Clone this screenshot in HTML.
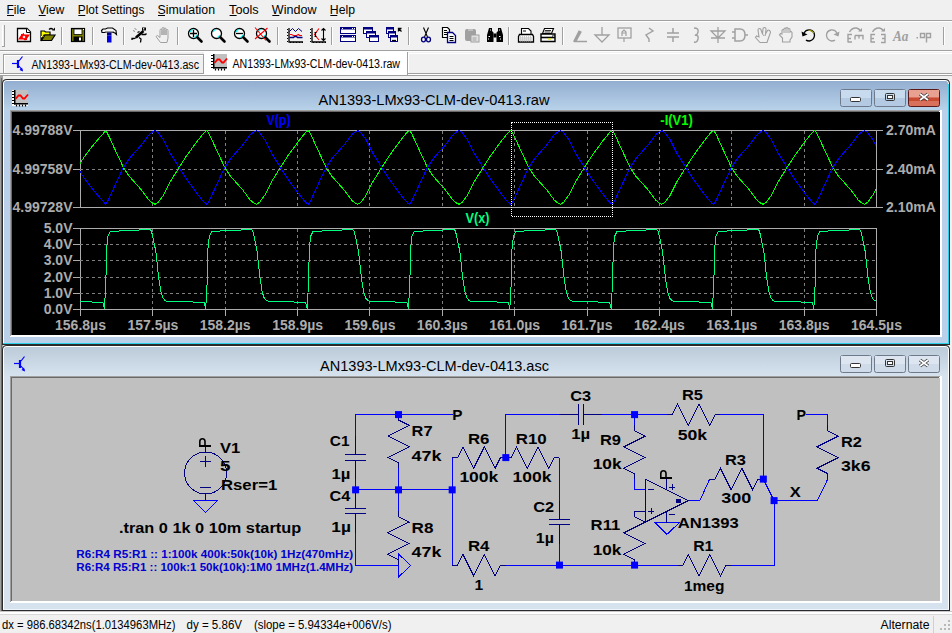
<!DOCTYPE html>
<html><head><meta charset="utf-8"><style>
html,body{margin:0;padding:0;width:952px;height:633px;overflow:hidden;background:#f0f0f0;font-family:"Liberation Sans",sans-serif}
.abs{position:absolute}
</style></head><body>
<svg class="abs" style="left:0;top:0" width="952" height="633" font-family="Liberation Sans"><text x="6.5" y="14.0" font-size="12" font-weight="normal" fill="#000" text-anchor="start" textLength="19.2" lengthAdjust="spacingAndGlyphs" >File</text><rect x="7.0" y="15" width="7" height="1" fill="#000"/><text x="38.2" y="14.0" font-size="12" font-weight="normal" fill="#000" text-anchor="start" textLength="26.2" lengthAdjust="spacingAndGlyphs" >View</text><rect x="38.7" y="15" width="7" height="1" fill="#000"/><text x="77.8" y="14.0" font-size="12" font-weight="normal" fill="#000" text-anchor="start" textLength="66.6" lengthAdjust="spacingAndGlyphs" >Plot Settings</text><rect x="78.3" y="15" width="7" height="1" fill="#000"/><text x="157.5" y="14.0" font-size="12" font-weight="normal" fill="#000" text-anchor="start" textLength="57.5" lengthAdjust="spacingAndGlyphs" >Simulation</text><rect x="158.0" y="15" width="7" height="1" fill="#000"/><text x="229.1" y="14.0" font-size="12" font-weight="normal" fill="#000" text-anchor="start" textLength="29.6" lengthAdjust="spacingAndGlyphs" >Tools</text><rect x="229.6" y="15" width="7" height="1" fill="#000"/><text x="271.8" y="14.0" font-size="12" font-weight="normal" fill="#000" text-anchor="start" textLength="44.7" lengthAdjust="spacingAndGlyphs" >Window</text><rect x="272.3" y="15" width="7" height="1" fill="#000"/><text x="329.8" y="14.0" font-size="12" font-weight="normal" fill="#000" text-anchor="start" textLength="25.2" lengthAdjust="spacingAndGlyphs" >Help</text><rect x="330.3" y="15" width="7" height="1" fill="#000"/><rect x="0" y="20" width="952" height="1" fill="#a0a0a0"/><rect x="0" y="21" width="952" height="1" fill="#fff"/><rect x="0" y="50" width="952" height="1" fill="#a0a0a0"/><rect x="0" y="51" width="952" height="1" fill="#fff"/><rect x="0" y="73" width="952" height="1" fill="#a0a0a0"/><rect x="0" y="74" width="952" height="1" fill="#fff"/><rect x="0" y="75" width="952" height="1" fill="#a0a0a0"/><rect x="3" y="54" width="201" height="1" fill="#a0a0a0"/><rect x="3" y="54" width="1" height="20" fill="#a0a0a0"/><rect x="203" y="54" width="1" height="20" fill="#a0a0a0"/><rect x="4" y="55" width="199" height="1" fill="#fff"/><rect x="4" y="55" width="1" height="18" fill="#fff"/><rect x="204" y="52" width="203" height="23" fill="#fff"/><rect x="407" y="52" width="1" height="23" fill="#a0a0a0"/><rect x="408" y="53" width="544" height="1" fill="#fff"/><rect x="408" y="53" width="1" height="20" fill="#fff"/><text x="31.5" y="69.0" font-size="12.5" font-weight="normal" fill="#000" text-anchor="start" textLength="167.5" lengthAdjust="spacingAndGlyphs" >AN1393-LMx93-CLM-dev-0413.asc</text><text x="232.5" y="67.5" font-size="12.5" font-weight="normal" fill="#000" text-anchor="start" textLength="167.5" lengthAdjust="spacingAndGlyphs" >AN1393-LMx93-CLM-dev-0413.raw</text><g transform="translate(12,56)" fill="none" stroke="#0000ff"><path d="M0 7.5H5" stroke-width="1.2"/><path d="M6 4V12" stroke-width="2.2"/><path d="M7 5L10.5 0.5M7 10L10.5 14.5" stroke-width="1.2"/><path d="M11 15.5L7.5 14L10 11.5Z" fill="#0000ff" stroke="none"/></g><g transform="translate(211,54)"><rect x="3" y="0" width="13" height="13" fill="#c0c0c0"/><rect x="0" y="0" width="3" height="16" fill="#fff"/><rect x="0" y="13" width="16" height="3" fill="#fff"/><rect x="2" y="0" width="1.5" height="14.5" fill="#000"/><rect x="2" y="13" width="14" height="1.5" fill="#000"/><path d="M0 1.5h2M0 4.5h2M0 7.5h2M0 10.5h2M0 13.5h2M4.5 14.5v2M7.5 14.5v2M10.5 14.5v2M13.5 14.5v2" stroke="#000" stroke-width="1.2"/><path d="M3.5 9L6.5 5.5H8.5L11 8.5H12.5L16 4.5" stroke="#f00" stroke-width="1.8" fill="none"/></g><rect x="0" y="76" width="3" height="537" fill="#a0a0a0"/><rect x="1" y="78" width="1" height="534" fill="#696969"/><rect x="949" y="76" width="3" height="537" fill="#f0f0f0"/><defs><linearGradient id="g79" x1="0" y1="0" x2="0" y2="1"><stop offset="0" stop-color="#93aed0"/><stop offset="1" stop-color="#b8d2ea"/></linearGradient></defs><path d="M2 345 V84 Q2 79 7 79 H945 Q950 79 950 84 V345 Z" fill="#2a2a2a"/><path d="M3 344 V84 Q3 80 7 80 H945 Q949 80 949 84 V344 Z" fill="#fff"/><path d="M4 344 V84 Q4 81 7 81 H945 Q948 81 948 84 V344 Z" fill="#bad0ea"/><path d="M4 110 V84 Q4 81 7 81 H945 Q948 81 948 84 V110 Z" fill="url(#g79)"/><rect x="3" y="343" width="946" height="1" fill="#2ad0e8"/><rect x="948" y="84" width="1" height="260" fill="#2ad0e8"/><rect x="2" y="344" width="948" height="1" fill="#2a2a2a"/><rect x="949" y="83" width="1" height="262" fill="#2a2a2a"/><g transform="translate(12,90)"><rect x="3" y="0" width="13" height="13" fill="#c0c0c0"/><rect x="0" y="0" width="3" height="16" fill="#fff"/><rect x="0" y="13" width="16" height="3" fill="#fff"/><rect x="2" y="0" width="1.5" height="14.5" fill="#000"/><rect x="2" y="13" width="14" height="1.5" fill="#000"/><path d="M0 1.5h2M0 4.5h2M0 7.5h2M0 10.5h2M0 13.5h2M4.5 14.5v2M7.5 14.5v2M10.5 14.5v2M13.5 14.5v2" stroke="#000" stroke-width="1.2"/><path d="M3.5 9L6.5 5.5H8.5L11 8.5H12.5L16 4.5" stroke="#f00" stroke-width="1.8" fill="none"/></g><text x="318.5" y="105.0" font-size="15" font-weight="normal" fill="#000" text-anchor="start" textLength="231.0" lengthAdjust="spacingAndGlyphs" >AN1393-LMx93-CLM-dev-0413.raw</text><rect x="840.5" y="89.5" width="31" height="17" rx="2" fill="#b4cae2" stroke="#6e7a8c"/><rect x="841" y="90" width="30" height="8" fill="#c8daee"/><rect x="850.5" y="97.5" width="10" height="4" rx="1" fill="#fff" stroke="#333"/><rect x="874.5" y="89.5" width="31" height="17" rx="2" fill="#b4cae2" stroke="#6e7a8c"/><rect x="875" y="90" width="30" height="8" fill="#c8daee"/><rect x="885.5" y="93.5" width="9" height="7" rx="1" fill="none" stroke="#333" stroke-width="1"/><rect x="887.5" y="95.5" width="5" height="3" fill="#fff" stroke="#333"/><rect x="908.5" y="89.5" width="31" height="17" rx="2" fill="#d9705b" stroke="#5a1a1a"/><rect x="909" y="90" width="30" height="7" fill="#e8a090"/><rect x="909" y="98" width="30" height="3" fill="#c84a30"/><path d="M920 94l8 6M928 94l-8 6" stroke="#333" stroke-width="3.4"/><path d="M920 94l8 6M928 94l-8 6" stroke="#fff" stroke-width="1.8"/><rect x="10" y="110" width="932" height="227" fill="#fff"/><rect x="10" y="110" width="930" height="1" fill="#a0a0a0"/><rect x="10" y="110" width="1" height="226" fill="#a0a0a0"/><rect x="11" y="111" width="928" height="1" fill="#696969"/><rect x="11" y="111" width="1" height="224" fill="#696969"/><rect x="12" y="112" width="928" height="223" fill="#000"/><defs><linearGradient id="g345" x1="0" y1="0" x2="0" y2="1"><stop offset="0" stop-color="#bccbd9"/><stop offset="1" stop-color="#d6e3ef"/></linearGradient></defs><path d="M2 611 V350 Q2 345 7 345 H945 Q950 345 950 350 V611 Z" fill="#2a2a2a"/><path d="M3 610 V350 Q3 346 7 346 H945 Q949 346 949 350 V610 Z" fill="#fff"/><path d="M4 610 V350 Q4 347 7 347 H945 Q948 347 948 350 V610 Z" fill="#d6e2ee"/><path d="M4 376 V350 Q4 347 7 347 H945 Q948 347 948 350 V376 Z" fill="url(#g345)"/><rect x="3" y="609" width="946" height="1" fill="#eef4fc"/><rect x="2" y="610" width="948" height="1" fill="#2a2a2a"/><rect x="949" y="349" width="1" height="262" fill="#2a2a2a"/><g transform="translate(14,356)" fill="none" stroke="#0000ff"><path d="M0 7.5H5" stroke-width="1.2"/><path d="M6 4V12" stroke-width="2.2"/><path d="M7 5L10.5 0.5M7 10L10.5 14.5" stroke-width="1.2"/><path d="M11 15.5L7.5 14L10 11.5Z" fill="#0000ff" stroke="none"/></g><text x="320.0" y="371.0" font-size="15" font-weight="normal" fill="#000" text-anchor="start" textLength="229.0" lengthAdjust="spacingAndGlyphs" >AN1393-LMx93-CLM-dev-0413.asc</text><rect x="840.5" y="355.5" width="31" height="17" rx="2" fill="#cfdbe8" stroke="#6e7a8c"/><rect x="841" y="356" width="30" height="8" fill="#dde6f0"/><rect x="850.5" y="363.5" width="10" height="4" rx="1" fill="#fff" stroke="#333"/><rect x="874.5" y="355.5" width="31" height="17" rx="2" fill="#cfdbe8" stroke="#6e7a8c"/><rect x="875" y="356" width="30" height="8" fill="#dde6f0"/><rect x="885.5" y="359.5" width="9" height="7" rx="1" fill="none" stroke="#333" stroke-width="1"/><rect x="887.5" y="361.5" width="5" height="3" fill="#fff" stroke="#333"/><rect x="908.5" y="355.5" width="31" height="17" rx="2" fill="#cfdbe8" stroke="#6e7a8c"/><rect x="909" y="356" width="30" height="8" fill="#dde6f0"/><path d="M920 360l8 6M928 360l-8 6" stroke="#333" stroke-width="3.4"/><path d="M920 360l8 6M928 360l-8 6" stroke="#fff" stroke-width="1.8"/><rect x="10" y="376" width="932" height="227" fill="#fff"/><rect x="10" y="376" width="930" height="1" fill="#a0a0a0"/><rect x="10" y="376" width="1" height="226" fill="#a0a0a0"/><rect x="11" y="377" width="928" height="1" fill="#696969"/><rect x="11" y="377" width="1" height="224" fill="#696969"/><rect x="12" y="378" width="928" height="223" fill="#c0c0c0"/><rect x="0" y="611" width="952" height="1" fill="#c8c8c8"/><rect x="0" y="612" width="952" height="2" fill="#fff"/><rect x="0" y="614" width="952" height="1" fill="#d8d8d8"/><text x="2.0" y="629.0" font-size="12" font-weight="normal" fill="#000" text-anchor="start" textLength="173.5" lengthAdjust="spacingAndGlyphs" >dx = 986.68342ns(1.0134963MHz)</text><text x="186.5" y="629.0" font-size="12" font-weight="normal" fill="#000" text-anchor="start" textLength="55.5" lengthAdjust="spacingAndGlyphs" >dy = 5.86V</text><text x="254.0" y="629.0" font-size="12" font-weight="normal" fill="#000" text-anchor="start" textLength="137.5" lengthAdjust="spacingAndGlyphs" >(slope = 5.94334e+006V/s)</text><text x="880.5" y="629.0" font-size="12" font-weight="normal" fill="#000" text-anchor="start" textLength="49.0" lengthAdjust="spacingAndGlyphs" >Alternate</text><rect x="933" y="616" width="1" height="17" fill="#d0d0d0"/><rect x="948" y="620" width="2" height="2" fill="#b8b8b8"/><rect x="944" y="624" width="2" height="2" fill="#b8b8b8"/><rect x="948" y="624" width="2" height="2" fill="#b8b8b8"/><rect x="940" y="628" width="2" height="2" fill="#b8b8b8"/><rect x="944" y="628" width="2" height="2" fill="#b8b8b8"/><rect x="948" y="628" width="2" height="2" fill="#b8b8b8"/></svg>
<svg class="abs" style="left:0;top:22px" width="952" height="28"><path d="M2.5 3v21" stroke="#fff"/><path d="M4.5 3v21M2 24.5h3" stroke="#a0a0a0"/><path d="M61.5 5v18" stroke="#a0a0a0"/><path d="M62.5 5v18" stroke="#fff"/><path d="M92.5 5v18" stroke="#a0a0a0"/><path d="M93.5 5v18" stroke="#fff"/><path d="M123.5 5v18" stroke="#a0a0a0"/><path d="M124.5 5v18" stroke="#fff"/><path d="M177.5 5v18" stroke="#a0a0a0"/><path d="M178.5 5v18" stroke="#fff"/><path d="M277.5 5v18" stroke="#a0a0a0"/><path d="M278.5 5v18" stroke="#fff"/><path d="M331.5 5v18" stroke="#a0a0a0"/><path d="M332.5 5v18" stroke="#fff"/><path d="M408.5 5v18" stroke="#a0a0a0"/><path d="M409.5 5v18" stroke="#fff"/><path d="M508.5 5v18" stroke="#a0a0a0"/><path d="M509.5 5v18" stroke="#fff"/><path d="M562.5 5v18" stroke="#a0a0a0"/><path d="M563.5 5v18" stroke="#fff"/><path d="M943.5 5v18" stroke="#a0a0a0"/><path d="M944.5 5v18" stroke="#fff"/><g transform="translate(16,5)"><path d="M1.5 1.5h9.5l3.5 3.5v9.5h-13z" fill="#fff" stroke="#000" stroke-width="1.3"/><path d="M10.5 1.5v4h4" fill="#fff" stroke="#000" stroke-width="1"/><path d="M2 12.5L5.5 7.5H14L10.5 12.5Z" fill="#f00"/><path d="M6.5 10L8 8.5 9.5 10 8 11.5Z" fill="#fff"/><path d="M5 7.5h3l-1 -1.5M11 12.5H8l1 1" fill="none" stroke="#f00"/></g><g transform="translate(40,5)"><path d="M1 4h3.5l1 1H10v3H4L1 14z" fill="#ff0" stroke="#000" stroke-width="1.2"/><path d="M1 9.5h6" stroke="#fff" stroke-dasharray="1 1"/><path d="M1.5 13.5L5 8H15L11.5 13.5z" fill="#808000" stroke="#000" stroke-width="1.2"/><path d="M9 2.5q2-2 4 0" fill="none" stroke="#000" stroke-width="1.2"/><path d="M12 3.5h3v-3z" fill="#000"/></g><g transform="translate(70,5)"><rect x="1.5" y="1.5" width="13" height="13" fill="#808000" stroke="#000" stroke-width="1.2"/><rect x="4" y="2" width="8" height="5.5" fill="#fff" stroke="#000" stroke-width="0.8"/><rect x="3.5" y="9.5" width="9" height="5" fill="#000"/><rect x="9" y="10.5" width="2" height="3" fill="#fff"/><rect x="13" y="2" width="1" height="1" fill="#fff"/></g><g transform="translate(101,5)"><path d="M0.5 3.5L2 2H4.5L6.5 1H11.5L15 3.5L15.5 7.5L14 6Q12 5 10 5H5L3.5 5.5H1Z" fill="#f4f4f4" stroke="#000" stroke-width="1.1"/><path d="M5 4.5H13" stroke="#999" stroke-width="1"/><rect x="6" y="5.5" width="4.5" height="3" fill="#000080"/><rect x="6" y="8.5" width="4.5" height="7" fill="#0000e0"/></g><g transform="translate(131,5)"><path d="M11 0.5h4v3h-4z" fill="#000"/><rect x="12" y="1.2" width="1.3" height="1.3" fill="#fff"/><path d="M12.5 4L5 10.5" stroke="#000" stroke-width="2.6"/><path d="M6.5 5.5L8.5 4.5M10.5 7.5H14.5L15.5 6.5M5.5 10.5L3 11.5H1V13M8 10.5L10 12L9.5 15.5" fill="none" stroke="#000" stroke-width="1.3"/><path d="M2 3.5l2 1M3.5 1.5l2 1" stroke="#888" stroke-width="1"/></g><g transform="translate(155,5)"><path d="M5.5 15.5L1 9.5 2.5 8.5 5 10.5V3.5Q5 2 6 2T7 3.5V8V1.5Q7 0.5 8 0.5T9 1.5V8V2Q9 1 10 1T11 2V8V3.5Q11 2.5 12 2.5T13 3.5V11L12 15.5Z" fill="none" stroke="#a0a0a0" stroke-width="1"/></g><g transform="translate(187,5)"><circle cx="6.5" cy="6.5" r="5" fill="#fff" stroke="#000" stroke-width="1.3"/><path d="M10 10l4.5 4.5" stroke="#000" stroke-width="2.6" stroke-linecap="round"/><path d="M3.2 5q0.8-2 2.5-2.5M9.8 8q-0.8 2-2.5 2.5" stroke="#0ff" stroke-width="1.2" fill="none"/><path d="M3 6.5h7M6.5 3v7" stroke="#000" stroke-width="1.3"/></g><g transform="translate(210,5)"><circle cx="6.5" cy="6.5" r="5" fill="#fff" stroke="#000" stroke-width="1.3"/><path d="M10 10l4.5 4.5" stroke="#000" stroke-width="2.6" stroke-linecap="round"/><path d="M3.2 5q0.8-2 2.5-2.5M9.8 8q-0.8 2-2.5 2.5" stroke="#0ff" stroke-width="1.2" fill="none"/></g><g transform="translate(233,5)"><circle cx="6.5" cy="6.5" r="5" fill="#fff" stroke="#000" stroke-width="1.3"/><path d="M10 10l4.5 4.5" stroke="#000" stroke-width="2.6" stroke-linecap="round"/><path d="M3.2 5q0.8-2 2.5-2.5M9.8 8q-0.8 2-2.5 2.5" stroke="#0ff" stroke-width="1.2" fill="none"/><path d="M3 6.5h7" stroke="#000" stroke-width="1.3"/></g><g transform="translate(255,5)"><circle cx="6.5" cy="6.5" r="5" fill="#fff" stroke="#000" stroke-width="1.3"/><path d="M10 10l4.5 4.5" stroke="#000" stroke-width="2.6" stroke-linecap="round"/><path d="M3.2 5q0.8-2 2.5-2.5M9.8 8q-0.8 2-2.5 2.5" stroke="#0ff" stroke-width="1.2" fill="none"/><path d="M0 0.5l11 13M12.5 1L0 12" stroke="#f00" stroke-width="1.1"/></g><g transform="translate(287,5)"><path d="M2 1V15H16" fill="none" stroke="#000" stroke-width="1.3"/><path d="M0.5 2v1M0.5 5v1M0.5 8v1M0.5 11v1M0.5 14v1M3 15.5h1M6 15.5h1M9 15.5h1M12 15.5h1M15 15.5h1" stroke="#000"/><path d="M2.5 4.5l3-3 3 3 3-3 3.5 3" fill="none" stroke="#000080" stroke-width="1"/><path d="M2.5 7.5h2l2 1h3l2-1 1 1h2.5" fill="none" stroke="#f00" stroke-width="1.2"/><path d="M2.5 10.5h4l1-1h2l1 1h5" fill="none" stroke="#000080" stroke-width="1.4"/></g><g transform="translate(310,5)"><path d="M2 1V15H16" fill="none" stroke="#000" stroke-width="1.3"/><path d="M0.5 2v1M0.5 5v1M0.5 8v1M0.5 11v1M0.5 14v1M3 15.5h1M6 15.5h1M9 15.5h1M12 15.5h1M15 15.5h1" stroke="#000"/><path d="M9 1.5L4.5 7.5 9 13" fill="none" stroke="#f00" stroke-width="1.1"/><path d="M13.5 1.5v12M11.5 3.5l2-2 2 2M11.5 11.5l2 2 2-2M5.5 5v5M4.5 5.5h2M4.5 9.5h2" fill="none" stroke="#000" stroke-width="1.1"/></g><g transform="translate(340,5)"><rect x="0.5" y="0.5" width="15" height="6" fill="#fff" stroke="#000080"/><rect x="0.5" y="0" width="15" height="2.5" fill="#000080"/><rect x="2" y="1" width="1" height="1" fill="#fff"/><rect x="12" y="1" width="1" height="1" fill="#fff"/><rect x="14" y="1" width="1" height="1" fill="#fff"/><rect x="0.5" y="8.5" width="15" height="6" fill="#fff" stroke="#000080"/><rect x="0.5" y="8" width="15" height="2.5" fill="#000080"/><rect x="2" y="9" width="1" height="1" fill="#fff"/><rect x="12" y="9" width="1" height="1" fill="#fff"/><rect x="14" y="9" width="1" height="1" fill="#fff"/></g><g transform="translate(363,5)"><rect x="0.5" y="0.5" width="9" height="6" fill="#fff" stroke="#000080"/><rect x="0.5" y="0" width="9" height="2.5" fill="#000080"/><rect x="3.5" y="4.5" width="9" height="6" fill="#fff" stroke="#000080"/><rect x="3.5" y="4" width="9" height="2.5" fill="#000080"/><rect x="6.5" y="8.5" width="9" height="6" fill="#fff" stroke="#000080"/><rect x="6.5" y="8" width="9" height="2.5" fill="#000080"/></g><g transform="translate(386,5)"><rect x="0.5" y="0.5" width="7" height="6" fill="#fff" stroke="#000080"/><rect x="0.5" y="0" width="7" height="2.5" fill="#000080"/><rect x="2.5" y="4.5" width="7" height="6" fill="#fff" stroke="#000080"/><rect x="2.5" y="4" width="7" height="2.5" fill="#000080"/><rect x="4.5" y="8.5" width="7" height="6" fill="#fff" stroke="#000080"/><rect x="4.5" y="8" width="7" height="2.5" fill="#000080"/><path d="M12.5 4.5v-3h3M12.5 1.5l3 3" stroke="#000" fill="none" stroke-width="1.3"/><path d="M6 13.5h4" stroke="#000" stroke-width="1.3"/></g><g transform="translate(418,5)"><path d="M5.5 0.5L9.5 10M10.5 0.5L6.5 10" stroke="#000" stroke-width="1.1"/><ellipse cx="5.5" cy="12.5" rx="2" ry="2.3" fill="none" stroke="#000080" stroke-width="1.3"/><ellipse cx="10.5" cy="12.5" rx="2" ry="2.3" fill="none" stroke="#000080" stroke-width="1.3"/></g><g transform="translate(441,5)"><path d="M1.5 0.5h5l2 2v8h-7z" fill="#fff" stroke="#000" stroke-width="1.2"/><path d="M3 3.5h3M3 5.5h4M3 7.5h4" stroke="#000" stroke-width="1"/><path d="M6.5 5.5h5l3 3v7h-8z" fill="#fff" stroke="#000080" stroke-width="1.3"/><path d="M8.5 9.5h4M8.5 11.5h4M8.5 13.5h4" stroke="#000" stroke-width="1"/></g><g transform="translate(464,5)"><rect x="1" y="2" width="11" height="12" rx="2" fill="#a0a0a0"/><path d="M4 3h5" stroke="#ddd"/><rect x="7" y="8" width="8" height="7" fill="#e0e0e0" stroke="#a0a0a0"/><path d="M8.5 11h4M8.5 13h4" stroke="#a0a0a0"/></g><g transform="translate(487,5)"><path d="M2 1h3v3l1.5 1.5V15H0V8zM11 1h3l2 7v7H9.5V5.5L11 4z" fill="#000"/><path d="M6.5 6.5h3v4h-3z" fill="#000"/><path d="M1.5 9.5h1.5M12 9.5h1.5M3 3h1M12 3h1M1 12h1M13 12h1" stroke="#fff"/></g><g transform="translate(518,5)"><path d="M3.5 1.5h7l2.5 2.5v3.5h-9.5z" fill="#fff" stroke="#000" stroke-width="1.1"/><path d="M5 4h3" stroke="#000"/><path d="M1.5 7.5h13l1 2v5.5H0.5V9.5z" fill="#fff" stroke="#000" stroke-width="1.3"/><path d="M2 10h12M2 12h12M2 14h12" stroke="#999" stroke-dasharray="1 1"/><path d="M3 11h12M3 13h12" stroke="#bbb" stroke-dasharray="1 1"/></g><g transform="translate(540,5)"><path d="M4.5 1.5h9l-2 5h-9z" fill="#fff" stroke="#000" stroke-width="1.1"/><path d="M5 3.5h6M4.5 5h6" stroke="#000" stroke-width="0.8"/><path d="M1 7h14v7.5H1z" fill="#fff" stroke="#000" stroke-width="1.4"/><path d="M1 10.5h14" stroke="#000" stroke-width="1.6"/><path d="M8 12h3" stroke="#e0e000" stroke-width="1.2"/><path d="M12.5 8.5v1M14 8v1" stroke="#000"/></g><g transform="translate(572,5)"><path d="M2 14l5-10 2 1-5 9zM2 14.5h13" fill="#a0a0a0" stroke="#a0a0a0" stroke-width="1.3"/></g><g transform="translate(594,5)"><path d="M8 0v8M1 8h14L8 15z" fill="none" stroke="#a0a0a0" stroke-width="1.3"/></g><g transform="translate(617,5)"><rect x="1" y="1" width="13" height="10" fill="none" stroke="#a0a0a0" stroke-width="1.3"/><path d="M5 9V5l2-2 2 2v4M5 6h4M7 11v4" fill="none" stroke="#a0a0a0" stroke-width="1.2"/></g><g transform="translate(642,5)"><path d="M7 1l4 3-7 4 3 4 0 3" fill="none" stroke="#a0a0a0" stroke-width="1.4"/></g><g transform="translate(665,5)"><path d="M8 1v5M8 10v5M2 6h12M2 10h12" fill="none" stroke="#a0a0a0" stroke-width="1.5"/></g><g transform="translate(690,5)"><path d="M4 1q5 0 4 4t-3 3q4 0 3 4t-4 3" fill="none" stroke="#a0a0a0" stroke-width="1.4"/></g><g transform="translate(710,5)"><path d="M8 0v16M1 4h14L8 11zM1 11h14" fill="none" stroke="#a0a0a0" stroke-width="1.3"/></g><g transform="translate(732,5)"><path d="M0 5h3M0 11h3M3 2h5q5 0 5 6t-5 6H3zM13 8h3" fill="none" stroke="#a0a0a0" stroke-width="1.5"/></g><g transform="translate(755,5)"><path d="M5 15.5L0.5 10.5 1.5 9 4 10 3 3Q3 1.5 4.5 1.5T6 3L7.5 7 8 2Q8 0.5 9.5 0.5T11 2L10.5 7 12.5 3.5Q13.5 2.5 14.5 3.5T15.5 5.5L13.5 11 12 15.5Z" fill="none" stroke="#a0a0a0" stroke-width="1.1"/><path d="M7.5 7L9 9M10.5 7L10 9" stroke="#a0a0a0"/></g><g transform="translate(779,5)"><path d="M3.5 15V11L0.5 8 1.5 6.5 3 7V3.5Q3 2.5 4 2.5T5 3.5V2Q5 1 6 1T7 2V1.5Q7 0.5 8 0.5T9 1.5V2.5Q9 1.5 10 1.5T11 2.5V5Q11.5 4.5 12 4.5T13 5.5V10L11 13V15Z" fill="none" stroke="#a0a0a0" stroke-width="1.1"/><path d="M5 3.5V6M7 2V6M9 2.5V6" stroke="#a0a0a0"/></g><g transform="translate(801,5)"><path d="M3 6Q5 2.5 9 3 13.5 4 13.5 8.5 13 13 8.5 14 6 14 5 13" fill="none" stroke="#000" stroke-width="1.3"/><path d="M7.5 3.2Q11 3 12.8 6" fill="none" stroke="#a0a000" stroke-width="1.1"/><path d="M0.5 4.5L1.5 9.5 6.5 7.5z" fill="#000"/></g><g transform="translate(824,5)"><path d="M13 6Q11 2.5 7 3 2.5 4 2.5 8.5 3 13 7.5 14 10 14 11 13" fill="none" stroke="#a0a0a0" stroke-width="1.3"/><path d="M15.5 4.5L14.5 9.5 9.5 7.5z" fill="#a0a0a0"/></g><g transform="translate(847,5)"><path d="M1 15.5V7.5H5M1 11.5H4M1 15H5M8 8.5V12.5M8 8.5H16V12.5M12 8.5V11.5M2.5 5Q5 0.5 9.5 1 12 1.5 13.5 4" fill="none" stroke="#a0a0a0" stroke-width="1.4"/><path d="M11 4.5H15V1Z" fill="#a0a0a0"/></g><g transform="translate(870,5)"><path d="M1 15.5V7.5H5M1 11.5H4M1 15H5M11 7.5H15V15.5H11M12 11.5H15M2.5 5Q5 0.5 9.5 1 12 1.5 13.5 4" fill="none" stroke="#a0a0a0" stroke-width="1.4"/><path d="M11 4.5H15V1Z" fill="#a0a0a0"/></g><g transform="translate(893,5)"><text x="0" y="13.5" font-family="Liberation Serif" font-style="italic" font-weight="bold" font-size="14" fill="#a0a0a0" textLength="15.5" lengthAdjust="spacingAndGlyphs">Aa</text></g><g transform="translate(916,5)"><rect x="0.5" y="10" width="1.5" height="1.5" fill="#a0a0a0"/><path d="M4.5 6.5h4v4h-4zM10.5 6.5h4v4h-4zM10.5 10.5v5" fill="none" stroke="#a0a0a0" stroke-width="1.4"/></g></svg>
<svg class="abs" style="left:0;top:0" width="952" height="633"><g shape-rendering="crispEdges" stroke="#acacac" fill="none"><path d="M73 130.5H876.5M73 207.5H876.5M80.5 130V208M876.5 130V208M876 130.5H883M876 207.5H883M876 169.5H883M73 169.5H80"/><path d="M80 169.5H876" stroke-dasharray="3 3" stroke="#808080"/><path d="M152.5 131V207" stroke-dasharray="3 3" stroke="#808080"/><path d="M225.5 131V207" stroke-dasharray="3 3" stroke="#808080"/><path d="M297.5 131V207" stroke-dasharray="3 3" stroke="#808080"/><path d="M369.5 131V207" stroke-dasharray="3 3" stroke="#808080"/><path d="M442.5 131V207" stroke-dasharray="3 3" stroke="#808080"/><path d="M514.5 131V207" stroke-dasharray="3 3" stroke="#808080"/><path d="M587.5 131V207" stroke-dasharray="3 3" stroke="#808080"/><path d="M659.5 131V207" stroke-dasharray="3 3" stroke="#808080"/><path d="M731.5 131V207" stroke-dasharray="3 3" stroke="#808080"/><path d="M804.5 131V207" stroke-dasharray="3 3" stroke="#808080"/><path d="M73 228.5H876.5M73 309.5H876.5M80.5 228V316M876.5 228V316"/><path d="M73 244.5H80"/><path d="M80 244.5H876" stroke-dasharray="3 3" stroke="#808080"/><path d="M73 260.5H80"/><path d="M80 260.5H876" stroke-dasharray="3 3" stroke="#808080"/><path d="M73 277.5H80"/><path d="M80 277.5H876" stroke-dasharray="3 3" stroke="#808080"/><path d="M73 293.5H80"/><path d="M80 293.5H876" stroke-dasharray="3 3" stroke="#808080"/><path d="M152.5 229V309" stroke-dasharray="3 3" stroke="#808080"/><path d="M152.5 309V316"/><path d="M225.5 229V309" stroke-dasharray="3 3" stroke="#808080"/><path d="M225.5 309V316"/><path d="M297.5 229V309" stroke-dasharray="3 3" stroke="#808080"/><path d="M297.5 309V316"/><path d="M369.5 229V309" stroke-dasharray="3 3" stroke="#808080"/><path d="M369.5 309V316"/><path d="M442.5 229V309" stroke-dasharray="3 3" stroke="#808080"/><path d="M442.5 309V316"/><path d="M514.5 229V309" stroke-dasharray="3 3" stroke="#808080"/><path d="M514.5 309V316"/><path d="M587.5 229V309" stroke-dasharray="3 3" stroke="#808080"/><path d="M587.5 309V316"/><path d="M659.5 229V309" stroke-dasharray="3 3" stroke="#808080"/><path d="M659.5 309V316"/><path d="M731.5 229V309" stroke-dasharray="3 3" stroke="#808080"/><path d="M731.5 309V316"/><path d="M804.5 229V309" stroke-dasharray="3 3" stroke="#808080"/><path d="M804.5 309V316"/></g><path d="M80.0 164.0 L80.5 162.8 L81.0 161.9 L81.5 161.0 L82.0 160.2 L82.5 159.4 L83.0 158.7 L83.5 157.9 L84.0 157.2 L84.5 156.5 L85.0 155.7 L85.5 155.1 L86.0 154.4 L86.5 153.7 L87.0 153.0 L87.5 152.4 L88.0 151.7 L88.5 151.0 L89.0 150.4 L89.5 149.8 L90.0 149.1 L90.5 148.5 L91.0 147.9 L91.5 147.2 L92.0 146.6 L92.5 146.0 L93.0 145.4 L93.5 144.8 L94.0 144.2 L94.5 143.6 L95.0 143.0 L95.5 142.4 L96.0 141.8 L96.5 141.2 L97.0 140.6 L97.5 140.1 L98.0 139.5 L98.5 138.9 L99.0 138.3 L99.5 137.8 L100.0 137.2 L100.5 136.6 L101.0 136.1 L101.5 135.5 L102.0 134.9 L102.5 134.4 L103.0 133.8 L103.5 133.2 L104.0 132.7 L104.5 132.1 L105.0 131.6 L105.5 131.0 L106.0 130.8 L106.5 131.7 L107.0 132.6 L107.5 133.5 L108.0 134.4 L108.5 135.3 L109.0 136.4 L109.5 137.5 L110.0 138.6 L110.5 139.7 L111.0 140.8 L111.5 141.9 L112.0 143.0 L112.5 144.1 L113.0 145.2 L113.5 146.3 L114.0 147.4 L114.5 148.5 L115.0 149.5 L115.5 150.6 L116.0 151.7 L116.5 152.7 L117.0 153.8 L117.5 154.9 L118.0 155.9 L118.5 157.0 L119.0 158.1 L119.5 159.1 L120.0 160.2 L120.5 161.3 L121.0 162.3 L121.5 163.4 L122.0 164.5 L122.5 165.5 L123.0 166.6 L123.5 167.6 L124.0 168.4 L124.5 169.1 L125.0 169.9 L125.5 170.7 L126.0 171.4 L126.5 172.2 L127.0 173.0 L127.5 173.8 L128.0 174.5 L128.5 175.3 L129.0 176.1 L129.5 176.6 L130.0 177.2 L130.5 177.7 L131.0 178.3 L131.5 178.9 L132.0 179.4 L132.5 180.0 L133.0 180.5 L133.5 181.1 L134.0 181.6 L134.5 182.2 L135.0 182.8 L135.5 183.3 L136.0 183.9 L136.5 184.4 L137.0 185.0 L137.5 185.6 L138.0 186.1 L138.5 186.7 L139.0 187.2 L139.5 187.8 L140.0 188.4 L140.5 188.9 L141.0 189.5 L141.5 190.1 L142.0 190.8 L142.5 191.5 L143.0 192.1 L143.5 192.8 L144.0 193.5 L144.5 194.1 L145.0 194.8 L145.5 195.5 L146.0 196.1 L146.5 196.8 L147.0 197.5 L147.5 198.2 L148.0 198.8 L148.5 199.5 L149.0 200.2 L149.5 200.6 L150.0 201.0 L150.5 201.4 L151.0 201.8 L151.5 202.2 L152.0 202.6 L152.5 203.0 L153.0 203.3 L153.5 203.6 L154.0 203.8 L154.5 204.0 L155.0 204.2 L155.5 204.1 L156.0 203.8 L156.5 203.4 L157.0 203.1 L157.5 202.8 L158.0 202.4 L158.5 201.9 L159.0 201.2 L159.5 200.5 L160.0 199.8 L160.5 199.2 L161.0 198.5 L161.5 197.8 L162.0 197.1 L162.5 196.4 L163.0 195.8 L163.5 195.1 L164.0 194.1 L164.5 193.1 L165.0 192.1 L165.5 191.1 L166.0 190.1 L166.5 189.1 L167.0 188.1 L167.5 187.1 L168.0 186.1 L168.5 185.1 L169.0 184.1 L169.5 183.1 L170.0 182.1 L170.5 181.2 L171.0 180.4 L171.5 179.6 L172.0 178.8 L172.5 178.0 L173.0 177.2 L173.5 176.4 L174.0 175.6 L174.5 174.8 L175.0 174.0 L175.5 173.2 L176.0 172.4 L176.5 171.6 L177.0 170.8 L177.5 170.0 L178.0 169.2 L178.5 168.4 L179.0 167.6 L179.5 166.8 L180.0 166.0 L180.5 165.2 L181.0 164.4 L181.5 163.6 L182.0 162.9 L182.5 162.1 L183.0 161.3 L183.5 160.5 L184.0 159.7 L184.5 158.9 L185.0 158.2 L185.5 157.4 L186.0 156.6 L186.5 155.9 L187.0 155.2 L187.5 154.5 L188.0 153.8 L188.5 153.1 L189.0 152.4 L189.5 151.7 L190.0 151.1 L190.5 150.4 L191.0 149.7 L191.5 149.0 L192.0 148.3 L192.5 147.6 L193.0 146.9 L193.5 146.3 L194.0 145.6 L194.5 144.9 L195.0 144.2 L195.5 143.5 L196.0 142.8 L196.5 142.1 L197.0 141.5 L197.5 140.8 L198.0 140.2 L198.5 139.6 L199.0 138.9 L199.5 138.3 L200.0 137.7 L200.5 137.1 L201.0 136.4 L201.5 135.8 L202.0 135.2 L202.5 134.6 L203.0 134.0 L203.5 133.4 L204.0 132.9 L204.5 132.4 L205.0 131.9 L205.5 131.4 L206.0 131.1 L206.5 130.9 L207.0 130.7 L207.5 131.1 L208.0 132.0 L208.5 132.9 L209.0 133.8 L209.5 134.7 L210.0 135.7 L210.5 136.8 L211.0 137.9 L211.5 139.0 L212.0 140.1 L212.5 141.2 L213.0 142.3 L213.5 143.4 L214.0 144.4 L214.5 145.5 L215.0 146.6 L215.5 147.7 L216.0 148.8 L216.5 149.9 L217.0 150.9 L217.5 152.0 L218.0 153.1 L218.5 154.1 L219.0 155.2 L219.5 156.3 L220.0 157.3 L220.5 158.4 L221.0 159.5 L221.5 160.5 L222.0 161.6 L222.5 162.7 L223.0 163.7 L223.5 164.8 L224.0 165.9 L224.5 166.9 L225.0 167.8 L225.5 168.6 L226.0 169.4 L226.5 170.2 L227.0 170.9 L227.5 171.7 L228.0 172.5 L228.5 173.2 L229.0 174.0 L229.5 174.8 L230.0 175.5 L230.5 176.2 L231.0 176.8 L231.5 177.4 L232.0 177.9 L232.5 178.5 L233.0 179.0 L233.5 179.6 L234.0 180.2 L234.5 180.7 L235.0 181.3 L235.5 181.8 L236.0 182.4 L236.5 182.9 L237.0 183.5 L237.5 184.1 L238.0 184.6 L238.5 185.2 L239.0 185.7 L239.5 186.3 L240.0 186.9 L240.5 187.4 L241.0 188.0 L241.5 188.5 L242.0 189.1 L242.5 189.7 L243.0 190.3 L243.5 191.0 L244.0 191.7 L244.5 192.3 L245.0 193.0 L245.5 193.7 L246.0 194.3 L246.5 195.0 L247.0 195.7 L247.5 196.4 L248.0 197.0 L248.5 197.7 L249.0 198.4 L249.5 199.0 L250.0 199.7 L250.5 200.3 L251.0 200.7 L251.5 201.1 L252.0 201.5 L252.5 201.9 L253.0 202.3 L253.5 202.7 L254.0 203.1 L254.5 203.4 L255.0 203.6 L255.5 203.8 L256.0 204.1 L256.5 204.3 L257.0 204.0 L257.5 203.7 L258.0 203.3 L258.5 203.0 L259.0 202.7 L259.5 202.3 L260.0 201.7 L260.5 201.0 L261.0 200.3 L261.5 199.6 L262.0 199.0 L262.5 198.3 L263.0 197.6 L263.5 196.9 L264.0 196.2 L264.5 195.6 L265.0 194.8 L265.5 193.8 L266.0 192.8 L266.5 191.8 L267.0 190.8 L267.5 189.8 L268.0 188.8 L268.5 187.8 L269.0 186.8 L269.5 185.8 L270.0 184.8 L270.5 183.8 L271.0 182.8 L271.5 181.7 L272.0 180.9 L272.5 180.1 L273.0 179.3 L273.5 178.5 L274.0 177.7 L274.5 176.9 L275.0 176.1 L275.5 175.3 L276.0 174.5 L276.5 173.7 L277.0 172.9 L277.5 172.1 L278.0 171.3 L278.5 170.5 L279.0 169.7 L279.5 168.9 L280.0 168.1 L280.5 167.3 L281.0 166.5 L281.5 165.7 L282.0 165.0 L282.5 164.2 L283.0 163.4 L283.5 162.6 L284.0 161.8 L284.5 161.0 L285.0 160.3 L285.5 159.5 L286.0 158.7 L286.5 157.9 L287.0 157.1 L287.5 156.4 L288.0 155.6 L288.5 155.0 L289.0 154.3 L289.5 153.6 L290.0 152.9 L290.5 152.2 L291.0 151.5 L291.5 150.8 L292.0 150.2 L292.5 149.5 L293.0 148.8 L293.5 148.1 L294.0 147.4 L294.5 146.7 L295.0 146.0 L295.5 145.3 L296.0 144.7 L296.5 144.0 L297.0 143.3 L297.5 142.6 L298.0 141.9 L298.5 141.2 L299.0 140.6 L299.5 140.0 L300.0 139.4 L300.5 138.7 L301.0 138.1 L301.5 137.5 L302.0 136.9 L302.5 136.2 L303.0 135.6 L303.5 135.0 L304.0 134.4 L304.5 133.8 L305.0 133.2 L305.5 132.7 L306.0 132.2 L306.5 131.7 L307.0 131.2 L307.5 131.0 L308.0 130.8 L308.5 130.6 L309.0 131.4 L309.5 132.3 L310.0 133.2 L310.5 134.1 L311.0 135.0 L311.5 136.0 L312.0 137.1 L312.5 138.2 L313.0 139.3 L313.5 140.4 L314.0 141.5 L314.5 142.6 L315.0 143.7 L315.5 144.8 L316.0 145.9 L316.5 147.0 L317.0 148.1 L317.5 149.1 L318.0 150.2 L318.5 151.3 L319.0 152.3 L319.5 153.4 L320.0 154.5 L320.5 155.5 L321.0 156.6 L321.5 157.7 L322.0 158.7 L322.5 159.8 L323.0 160.9 L323.5 161.9 L324.0 163.0 L324.5 164.1 L325.0 165.1 L325.5 166.2 L326.0 167.3 L326.5 168.1 L327.0 168.9 L327.5 169.6 L328.0 170.4 L328.5 171.2 L329.0 171.9 L329.5 172.7 L330.0 173.5 L330.5 174.2 L331.0 175.0 L331.5 175.8 L332.0 176.4 L332.5 177.0 L333.0 177.5 L333.5 178.1 L334.0 178.7 L334.5 179.2 L335.0 179.8 L335.5 180.3 L336.0 180.9 L336.5 181.4 L337.0 182.0 L337.5 182.6 L338.0 183.1 L338.5 183.7 L339.0 184.2 L339.5 184.8 L340.0 185.4 L340.5 185.9 L341.0 186.5 L341.5 187.0 L342.0 187.6 L342.5 188.1 L343.0 188.7 L343.5 189.3 L344.0 189.9 L344.5 190.5 L345.0 191.2 L345.5 191.9 L346.0 192.6 L346.5 193.2 L347.0 193.9 L347.5 194.6 L348.0 195.2 L348.5 195.9 L349.0 196.6 L349.5 197.2 L350.0 197.9 L350.5 198.6 L351.0 199.2 L351.5 199.9 L352.0 200.5 L352.5 200.9 L353.0 201.3 L353.5 201.7 L354.0 202.0 L354.5 202.4 L355.0 202.8 L355.5 203.2 L356.0 203.5 L356.5 203.7 L357.0 203.9 L357.5 204.1 L358.0 204.2 L358.5 203.9 L359.0 203.6 L359.5 203.2 L360.0 202.9 L360.5 202.6 L361.0 202.1 L361.5 201.5 L362.0 200.8 L362.5 200.1 L363.0 199.4 L363.5 198.7 L364.0 198.1 L364.5 197.4 L365.0 196.7 L365.5 196.0 L366.0 195.3 L366.5 194.4 L367.0 193.4 L367.5 192.4 L368.0 191.4 L368.5 190.4 L369.0 189.4 L369.5 188.4 L370.0 187.4 L370.5 186.4 L371.0 185.4 L371.5 184.4 L372.0 183.4 L372.5 182.4 L373.0 181.5 L373.5 180.7 L374.0 179.9 L374.5 179.1 L375.0 178.3 L375.5 177.5 L376.0 176.7 L376.5 175.9 L377.0 175.1 L377.5 174.3 L378.0 173.5 L378.5 172.7 L379.0 171.9 L379.5 171.0 L380.0 170.2 L380.5 169.4 L381.0 168.6 L381.5 167.8 L382.0 167.0 L382.5 166.3 L383.0 165.5 L383.5 164.7 L384.0 163.9 L384.5 163.1 L385.0 162.4 L385.5 161.6 L386.0 160.8 L386.5 160.0 L387.0 159.2 L387.5 158.4 L388.0 157.7 L388.5 156.9 L389.0 156.1 L389.5 155.4 L390.0 154.7 L390.5 154.0 L391.0 153.4 L391.5 152.7 L392.0 152.0 L392.5 151.3 L393.0 150.6 L393.5 149.9 L394.0 149.2 L394.5 148.6 L395.0 147.9 L395.5 147.2 L396.0 146.5 L396.5 145.8 L397.0 145.1 L397.5 144.4 L398.0 143.8 L398.5 143.1 L399.0 142.4 L399.5 141.7 L400.0 141.0 L400.5 140.4 L401.0 139.8 L401.5 139.2 L402.0 138.5 L402.5 137.9 L403.0 137.3 L403.5 136.7 L404.0 136.0 L404.5 135.4 L405.0 134.8 L405.5 134.2 L406.0 133.6 L406.5 133.1 L407.0 132.6 L407.5 132.1 L408.0 131.6 L408.5 131.2 L409.0 131.0 L409.5 130.8 L410.0 130.7 L410.5 131.6 L411.0 132.5 L411.5 133.4 L412.0 134.3 L412.5 135.3 L413.0 136.4 L413.5 137.5 L414.0 138.6 L414.5 139.7 L415.0 140.8 L415.5 141.9 L416.0 143.0 L416.5 144.1 L417.0 145.1 L417.5 146.2 L418.0 147.3 L418.5 148.4 L419.0 149.5 L419.5 150.6 L420.0 151.6 L420.5 152.7 L421.0 153.8 L421.5 154.8 L422.0 155.9 L422.5 157.0 L423.0 158.0 L423.5 159.1 L424.0 160.2 L424.5 161.2 L425.0 162.3 L425.5 163.4 L426.0 164.4 L426.5 165.5 L427.0 166.6 L427.5 167.6 L428.0 168.3 L428.5 169.1 L429.0 169.9 L429.5 170.6 L430.0 171.4 L430.5 172.2 L431.0 173.0 L431.5 173.7 L432.0 174.5 L432.5 175.3 L433.0 176.0 L433.5 176.6 L434.0 177.2 L434.5 177.7 L435.0 178.3 L435.5 178.8 L436.0 179.4 L436.5 179.9 L437.0 180.5 L437.5 181.1 L438.0 181.6 L438.5 182.2 L439.0 182.7 L439.5 183.3 L440.0 183.9 L440.5 184.4 L441.0 185.0 L441.5 185.5 L442.0 186.1 L442.5 186.7 L443.0 187.2 L443.5 187.8 L444.0 188.3 L444.5 188.9 L445.0 189.4 L445.5 190.1 L446.0 190.8 L446.5 191.4 L447.0 192.1 L447.5 192.8 L448.0 193.4 L448.5 194.1 L449.0 194.8 L449.5 195.4 L450.0 196.1 L450.5 196.8 L451.0 197.5 L451.5 198.1 L452.0 198.8 L452.5 199.5 L453.0 200.1 L453.5 200.6 L454.0 201.0 L454.5 201.4 L455.0 201.8 L455.5 202.2 L456.0 202.6 L456.5 203.0 L457.0 203.3 L457.5 203.6 L458.0 203.8 L458.5 204.0 L459.0 204.2 L459.5 204.1 L460.0 203.8 L460.5 203.4 L461.0 203.1 L461.5 202.8 L462.0 202.4 L462.5 201.9 L463.0 201.2 L463.5 200.6 L464.0 199.9 L464.5 199.2 L465.0 198.5 L465.5 197.8 L466.0 197.2 L466.5 196.5 L467.0 195.8 L467.5 195.1 L468.0 194.1 L468.5 193.1 L469.0 192.1 L469.5 191.1 L470.0 190.1 L470.5 189.1 L471.0 188.1 L471.5 187.1 L472.0 186.1 L472.5 185.1 L473.0 184.1 L473.5 183.1 L474.0 182.1 L474.5 181.2 L475.0 180.4 L475.5 179.6 L476.0 178.8 L476.5 178.0 L477.0 177.2 L477.5 176.4 L478.0 175.6 L478.5 174.8 L479.0 174.0 L479.5 173.2 L480.0 172.4 L480.5 171.6 L481.0 170.8 L481.5 170.0 L482.0 169.2 L482.5 168.4 L483.0 167.6 L483.5 166.8 L484.0 166.0 L484.5 165.2 L485.0 164.5 L485.5 163.7 L486.0 162.9 L486.5 162.1 L487.0 161.3 L487.5 160.5 L488.0 159.8 L488.5 159.0 L489.0 158.2 L489.5 157.4 L490.0 156.6 L490.5 155.9 L491.0 155.2 L491.5 154.5 L492.0 153.8 L492.5 153.1 L493.0 152.5 L493.5 151.8 L494.0 151.1 L494.5 150.4 L495.0 149.7 L495.5 149.0 L496.0 148.3 L496.5 147.7 L497.0 147.0 L497.5 146.3 L498.0 145.6 L498.5 144.9 L499.0 144.2 L499.5 143.5 L500.0 142.9 L500.5 142.2 L501.0 141.5 L501.5 140.8 L502.0 140.2 L502.5 139.6 L503.0 139.0 L503.5 138.3 L504.0 137.7 L504.5 137.1 L505.0 136.5 L505.5 135.9 L506.0 135.2 L506.5 134.6 L507.0 134.0 L507.5 133.4 L508.0 132.9 L508.5 132.4 L509.0 131.9 L509.5 131.4 L510.0 131.1 L510.5 130.9 L511.0 130.7 L511.5 131.0 L512.0 131.9 L512.5 132.8 L513.0 133.7 L513.5 134.6 L514.0 135.6 L514.5 136.7 L515.0 137.8 L515.5 138.9 L516.0 140.0 L516.5 141.1 L517.0 142.2 L517.5 143.3 L518.0 144.4 L518.5 145.5 L519.0 146.6 L519.5 147.7 L520.0 148.8 L520.5 149.8 L521.0 150.9 L521.5 152.0 L522.0 153.0 L522.5 154.1 L523.0 155.2 L523.5 156.2 L524.0 157.3 L524.5 158.4 L525.0 159.4 L525.5 160.5 L526.0 161.6 L526.5 162.6 L527.0 163.7 L527.5 164.8 L528.0 165.8 L528.5 166.9 L529.0 167.8 L529.5 168.6 L530.0 169.4 L530.5 170.1 L531.0 170.9 L531.5 171.7 L532.0 172.4 L532.5 173.2 L533.0 174.0 L533.5 174.7 L534.0 175.5 L534.5 176.2 L535.0 176.8 L535.5 177.3 L536.0 177.9 L536.5 178.5 L537.0 179.0 L537.5 179.6 L538.0 180.1 L538.5 180.7 L539.0 181.2 L539.5 181.8 L540.0 182.4 L540.5 182.9 L541.0 183.5 L541.5 184.0 L542.0 184.6 L542.5 185.2 L543.0 185.7 L543.5 186.3 L544.0 186.8 L544.5 187.4 L545.0 187.9 L545.5 188.5 L546.0 189.1 L546.5 189.6 L547.0 190.3 L547.5 191.0 L548.0 191.6 L548.5 192.3 L549.0 193.0 L549.5 193.7 L550.0 194.3 L550.5 195.0 L551.0 195.7 L551.5 196.3 L552.0 197.0 L552.5 197.7 L553.0 198.3 L553.5 199.0 L554.0 199.7 L554.5 200.3 L555.0 200.7 L555.5 201.1 L556.0 201.5 L556.5 201.9 L557.0 202.3 L557.5 202.7 L558.0 203.1 L558.5 203.4 L559.0 203.6 L559.5 203.8 L560.0 204.1 L560.5 204.3 L561.0 204.0 L561.5 203.7 L562.0 203.3 L562.5 203.0 L563.0 202.7 L563.5 202.3 L564.0 201.7 L564.5 201.0 L565.0 200.3 L565.5 199.7 L566.0 199.0 L566.5 198.3 L567.0 197.6 L567.5 196.9 L568.0 196.3 L568.5 195.6 L569.0 194.8 L569.5 193.8 L570.0 192.8 L570.5 191.8 L571.0 190.8 L571.5 189.8 L572.0 188.8 L572.5 187.8 L573.0 186.8 L573.5 185.8 L574.0 184.8 L574.5 183.8 L575.0 182.8 L575.5 181.8 L576.0 181.0 L576.5 180.2 L577.0 179.4 L577.5 178.6 L578.0 177.8 L578.5 177.0 L579.0 176.1 L579.5 175.3 L580.0 174.5 L580.5 173.7 L581.0 172.9 L581.5 172.1 L582.0 171.3 L582.5 170.5 L583.0 169.7 L583.5 168.9 L584.0 168.1 L584.5 167.3 L585.0 166.5 L585.5 165.8 L586.0 165.0 L586.5 164.2 L587.0 163.4 L587.5 162.6 L588.0 161.9 L588.5 161.1 L589.0 160.3 L589.5 159.5 L590.0 158.7 L590.5 157.9 L591.0 157.2 L591.5 156.4 L592.0 155.7 L592.5 155.0 L593.0 154.3 L593.5 153.6 L594.0 152.9 L594.5 152.2 L595.0 151.6 L595.5 150.9 L596.0 150.2 L596.5 149.5 L597.0 148.8 L597.5 148.1 L598.0 147.4 L598.5 146.7 L599.0 146.1 L599.5 145.4 L600.0 144.7 L600.5 144.0 L601.0 143.3 L601.5 142.6 L602.0 141.9 L602.5 141.3 L603.0 140.6 L603.5 140.0 L604.0 139.4 L604.5 138.8 L605.0 138.1 L605.5 137.5 L606.0 136.9 L606.5 136.3 L607.0 135.7 L607.5 135.0 L608.0 134.4 L608.5 133.8 L609.0 133.3 L609.5 132.8 L610.0 132.3 L610.5 131.8 L611.0 131.3 L611.5 131.0 L612.0 130.8 L612.5 130.6 L613.0 131.3 L613.5 132.2 L614.0 133.1 L614.5 134.0 L615.0 134.9 L615.5 136.0 L616.0 137.1 L616.5 138.2 L617.0 139.3 L617.5 140.4 L618.0 141.5 L618.5 142.6 L619.0 143.7 L619.5 144.8 L620.0 145.9 L620.5 146.9 L621.0 148.0 L621.5 149.1 L622.0 150.2 L622.5 151.2 L623.0 152.3 L623.5 153.4 L624.0 154.4 L624.5 155.5 L625.0 156.6 L625.5 157.6 L626.0 158.7 L626.5 159.8 L627.0 160.8 L627.5 161.9 L628.0 163.0 L628.5 164.0 L629.0 165.1 L629.5 166.2 L630.0 167.2 L630.5 168.1 L631.0 168.8 L631.5 169.6 L632.0 170.4 L632.5 171.1 L633.0 171.9 L633.5 172.7 L634.0 173.4 L634.5 174.2 L635.0 175.0 L635.5 175.8 L636.0 176.4 L636.5 177.0 L637.0 177.5 L637.5 178.1 L638.0 178.6 L638.5 179.2 L639.0 179.7 L639.5 180.3 L640.0 180.9 L640.5 181.4 L641.0 182.0 L641.5 182.5 L642.0 183.1 L642.5 183.7 L643.0 184.2 L643.5 184.8 L644.0 185.3 L644.5 185.9 L645.0 186.5 L645.5 187.0 L646.0 187.6 L646.5 188.1 L647.0 188.7 L647.5 189.2 L648.0 189.8 L648.5 190.5 L649.0 191.2 L649.5 191.9 L650.0 192.5 L650.5 193.2 L651.0 193.9 L651.5 194.5 L652.0 195.2 L652.5 195.9 L653.0 196.5 L653.5 197.2 L654.0 197.9 L654.5 198.6 L655.0 199.2 L655.5 199.9 L656.0 200.5 L656.5 200.8 L657.0 201.2 L657.5 201.6 L658.0 202.0 L658.5 202.4 L659.0 202.8 L659.5 203.2 L660.0 203.5 L660.5 203.7 L661.0 203.9 L661.5 204.1 L662.0 204.2 L662.5 203.9 L663.0 203.6 L663.5 203.2 L664.0 202.9 L664.5 202.6 L665.0 202.2 L665.5 201.5 L666.0 200.8 L666.5 200.1 L667.0 199.4 L667.5 198.8 L668.0 198.1 L668.5 197.4 L669.0 196.7 L669.5 196.0 L670.0 195.4 L670.5 194.5 L671.0 193.5 L671.5 192.5 L672.0 191.5 L672.5 190.5 L673.0 189.5 L673.5 188.5 L674.0 187.5 L674.5 186.5 L675.0 185.5 L675.5 184.5 L676.0 183.5 L676.5 182.5 L677.0 181.5 L677.5 180.7 L678.0 179.9 L678.5 179.1 L679.0 178.3 L679.5 177.5 L680.0 176.7 L680.5 175.9 L681.0 175.1 L681.5 174.3 L682.0 173.5 L682.5 172.7 L683.0 171.9 L683.5 171.1 L684.0 170.3 L684.5 169.5 L685.0 168.7 L685.5 167.9 L686.0 167.1 L686.5 166.3 L687.0 165.5 L687.5 164.7 L688.0 164.0 L688.5 163.2 L689.0 162.4 L689.5 161.6 L690.0 160.8 L690.5 160.0 L691.0 159.3 L691.5 158.5 L692.0 157.7 L692.5 156.9 L693.0 156.1 L693.5 155.4 L694.0 154.8 L694.5 154.1 L695.0 153.4 L695.5 152.7 L696.0 152.0 L696.5 151.3 L697.0 150.6 L697.5 150.0 L698.0 149.3 L698.5 148.6 L699.0 147.9 L699.5 147.2 L700.0 146.5 L700.5 145.8 L701.0 145.2 L701.5 144.5 L702.0 143.8 L702.5 143.1 L703.0 142.4 L703.5 141.7 L704.0 141.1 L704.5 140.4 L705.0 139.8 L705.5 139.2 L706.0 138.6 L706.5 137.9 L707.0 137.3 L707.5 136.7 L708.0 136.1 L708.5 135.5 L709.0 134.8 L709.5 134.2 L710.0 133.6 L710.5 133.1 L711.0 132.6 L711.5 132.1 L712.0 131.6 L712.5 131.2 L713.0 131.0 L713.5 130.8 L714.0 130.7 L714.5 131.6 L715.0 132.5 L715.5 133.4 L716.0 134.3 L716.5 135.2 L717.0 136.3 L717.5 137.4 L718.0 138.5 L718.5 139.6 L719.0 140.7 L719.5 141.8 L720.0 142.9 L720.5 144.0 L721.0 145.1 L721.5 146.2 L722.0 147.3 L722.5 148.4 L723.0 149.4 L723.5 150.5 L724.0 151.6 L724.5 152.6 L725.0 153.7 L725.5 154.8 L726.0 155.8 L726.5 156.9 L727.0 158.0 L727.5 159.0 L728.0 160.1 L728.5 161.2 L729.0 162.2 L729.5 163.3 L730.0 164.4 L730.5 165.4 L731.0 166.5 L731.5 167.5 L732.0 168.3 L732.5 169.1 L733.0 169.8 L733.5 170.6 L734.0 171.4 L734.5 172.2 L735.0 172.9 L735.5 173.7 L736.0 174.5 L736.5 175.2 L737.0 176.0 L737.5 176.6 L738.0 177.1 L738.5 177.7 L739.0 178.3 L739.5 178.8 L740.0 179.4 L740.5 179.9 L741.0 180.5 L741.5 181.0 L742.0 181.6 L742.5 182.2 L743.0 182.7 L743.5 183.3 L744.0 183.8 L744.5 184.4 L745.0 185.0 L745.5 185.5 L746.0 186.1 L746.5 186.6 L747.0 187.2 L747.5 187.7 L748.0 188.3 L748.5 188.9 L749.0 189.4 L749.5 190.1 L750.0 190.7 L750.5 191.4 L751.0 192.1 L751.5 192.7 L752.0 193.4 L752.5 194.1 L753.0 194.7 L753.5 195.4 L754.0 196.1 L754.5 196.8 L755.0 197.4 L755.5 198.1 L756.0 198.8 L756.5 199.4 L757.0 200.1 L757.5 200.6 L758.0 201.0 L758.5 201.4 L759.0 201.8 L759.5 202.2 L760.0 202.6 L760.5 203.0 L761.0 203.3 L761.5 203.5 L762.0 203.8 L762.5 204.0 L763.0 204.2 L763.5 204.1 L764.0 203.8 L764.5 203.5 L765.0 203.1 L765.5 202.8 L766.0 202.5 L766.5 201.9 L767.0 201.3 L767.5 200.6 L768.0 199.9 L768.5 199.2 L769.0 198.5 L769.5 197.9 L770.0 197.2 L770.5 196.5 L771.0 195.8 L771.5 195.1 L772.0 194.2 L772.5 193.2 L773.0 192.2 L773.5 191.2 L774.0 190.2 L774.5 189.2 L775.0 188.2 L775.5 187.2 L776.0 186.2 L776.5 185.2 L777.0 184.2 L777.5 183.2 L778.0 182.1 L778.5 181.3 L779.0 180.4 L779.5 179.6 L780.0 178.8 L780.5 178.0 L781.0 177.2 L781.5 176.4 L782.0 175.6 L782.5 174.8 L783.0 174.0 L783.5 173.2 L784.0 172.4 L784.5 171.6 L785.0 170.8 L785.5 170.0 L786.0 169.2 L786.5 168.4 L787.0 167.6 L787.5 166.8 L788.0 166.0 L788.5 165.3 L789.0 164.5 L789.5 163.7 L790.0 162.9 L790.5 162.1 L791.0 161.4 L791.5 160.6 L792.0 159.8 L792.5 159.0 L793.0 158.2 L793.5 157.4 L794.0 156.7 L794.5 155.9 L795.0 155.2 L795.5 154.5 L796.0 153.9 L796.5 153.2 L797.0 152.5 L797.5 151.8 L798.0 151.1 L798.5 150.4 L799.0 149.7 L799.5 149.1 L800.0 148.4 L800.5 147.7 L801.0 147.0 L801.5 146.3 L802.0 145.6 L802.5 144.9 L803.0 144.3 L803.5 143.6 L804.0 142.9 L804.5 142.2 L805.0 141.5 L805.5 140.9 L806.0 140.2 L806.5 139.6 L807.0 139.0 L807.5 138.4 L808.0 137.7 L808.5 137.1 L809.0 136.5 L809.5 135.9 L810.0 135.3 L810.5 134.6 L811.0 134.0 L811.5 133.4 L812.0 132.9 L812.5 132.4 L813.0 131.9 L813.5 131.4 L814.0 131.1 L814.5 130.9 L815.0 130.7 L815.5 131.0 L816.0 131.9 L816.5 132.8 L817.0 133.7 L817.5 134.6 L818.0 135.6 L818.5 136.7 L819.0 137.8 L819.5 138.9 L820.0 140.0 L820.5 141.1 L821.0 142.2 L821.5 143.3 L822.0 144.4 L822.5 145.5 L823.0 146.6 L823.5 147.6 L824.0 148.7 L824.5 149.8 L825.0 150.9 L825.5 151.9 L826.0 153.0 L826.5 154.1 L827.0 155.1 L827.5 156.2 L828.0 157.3 L828.5 158.3 L829.0 159.4 L829.5 160.5 L830.0 161.5 L830.5 162.6 L831.0 163.7 L831.5 164.7 L832.0 165.8 L832.5 166.9 L833.0 167.8 L833.5 168.6 L834.0 169.3 L834.5 170.1 L835.0 170.9 L835.5 171.6 L836.0 172.4 L836.5 173.2 L837.0 173.9 L837.5 174.7 L838.0 175.5 L838.5 176.2 L839.0 176.8 L839.5 177.3 L840.0 177.9 L840.5 178.4 L841.0 179.0 L841.5 179.5 L842.0 180.1 L842.5 180.7 L843.0 181.2 L843.5 181.8 L844.0 182.3 L844.5 182.9 L845.0 183.5 L845.5 184.0 L846.0 184.6 L846.5 185.1 L847.0 185.7 L847.5 186.3 L848.0 186.8 L848.5 187.4 L849.0 187.9 L849.5 188.5 L850.0 189.0 L850.5 189.6 L851.0 190.3 L851.5 190.9 L852.0 191.6 L852.5 192.3 L853.0 193.0 L853.5 193.6 L854.0 194.3 L854.5 195.0 L855.0 195.6 L855.5 196.3 L856.0 197.0 L856.5 197.6 L857.0 198.3 L857.5 199.0 L858.0 199.7 L858.5 200.3 L859.0 200.7 L859.5 201.1 L860.0 201.5 L860.5 201.9 L861.0 202.3 L861.5 202.7 L862.0 203.1 L862.5 203.4 L863.0 203.6 L863.5 203.8 L864.0 204.0 L864.5 204.3 L865.0 204.0 L865.5 203.7 L866.0 203.4 L866.5 203.0 L867.0 202.7 L867.5 202.4 L868.0 201.7 L868.5 201.0 L869.0 200.4 L869.5 199.7 L870.0 199.0 L870.5 198.3 L871.0 197.6 L871.5 197.0 L872.0 196.3 L872.5 195.6 L873.0 194.8 L873.5 193.8 L874.0 192.8 L874.5 191.8 L875.0 190.8 L875.5 189.8 L876.0 188.8" fill="none" stroke="#00ff00" stroke-width="1" shape-rendering="crispEdges"/><path d="M80.0 171.0 L80.5 172.2 L81.0 173.1 L81.5 174.0 L82.0 174.8 L82.5 175.6 L83.0 176.3 L83.5 177.1 L84.0 177.8 L84.5 178.5 L85.0 179.3 L85.5 179.9 L86.0 180.6 L86.5 181.3 L87.0 182.0 L87.5 182.6 L88.0 183.3 L88.5 184.0 L89.0 184.6 L89.5 185.2 L90.0 185.9 L90.5 186.5 L91.0 187.1 L91.5 187.8 L92.0 188.4 L92.5 189.0 L93.0 189.6 L93.5 190.2 L94.0 190.8 L94.5 191.4 L95.0 192.0 L95.5 192.6 L96.0 193.2 L96.5 193.8 L97.0 194.4 L97.5 194.9 L98.0 195.5 L98.5 196.1 L99.0 196.7 L99.5 197.2 L100.0 197.8 L100.5 198.4 L101.0 198.9 L101.5 199.5 L102.0 200.1 L102.5 200.6 L103.0 201.2 L103.5 201.8 L104.0 202.3 L104.5 202.9 L105.0 203.4 L105.5 204.0 L106.0 204.1 L106.5 203.2 L107.0 202.3 L107.5 201.4 L108.0 200.5 L108.5 199.6 L109.0 198.5 L109.5 197.4 L110.0 196.3 L110.5 195.2 L111.0 194.1 L111.5 193.0 L112.0 191.9 L112.5 190.8 L113.0 189.7 L113.5 188.6 L114.0 187.5 L114.5 186.4 L115.0 185.4 L115.5 184.3 L116.0 183.2 L116.5 182.2 L117.0 181.1 L117.5 180.0 L118.0 179.0 L118.5 177.9 L119.0 176.8 L119.5 175.8 L120.0 174.7 L120.5 173.6 L121.0 172.6 L121.5 171.5 L122.0 170.4 L122.5 169.4 L123.0 168.3 L123.5 167.3 L124.0 166.5 L124.5 165.8 L125.0 165.0 L125.5 164.2 L126.0 163.5 L126.5 162.7 L127.0 161.9 L127.5 161.1 L128.0 160.4 L128.5 159.6 L129.0 158.8 L129.5 158.3 L130.0 157.7 L130.5 157.2 L131.0 156.6 L131.5 156.0 L132.0 155.5 L132.5 154.9 L133.0 154.4 L133.5 153.8 L134.0 153.3 L134.5 152.7 L135.0 152.1 L135.5 151.6 L136.0 151.0 L136.5 150.5 L137.0 149.9 L137.5 149.3 L138.0 148.8 L138.5 148.2 L139.0 147.7 L139.5 147.1 L140.0 146.5 L140.5 146.0 L141.0 145.4 L141.5 144.8 L142.0 144.1 L142.5 143.4 L143.0 142.8 L143.5 142.1 L144.0 141.4 L144.5 140.8 L145.0 140.1 L145.5 139.4 L146.0 138.8 L146.5 138.1 L147.0 137.4 L147.5 136.7 L148.0 136.1 L148.5 135.4 L149.0 134.7 L149.5 134.3 L150.0 133.9 L150.5 133.5 L151.0 133.1 L151.5 132.7 L152.0 132.3 L152.5 131.9 L153.0 131.6 L153.5 131.3 L154.0 131.1 L154.5 130.9 L155.0 130.7 L155.5 130.8 L156.0 131.1 L156.5 131.5 L157.0 131.8 L157.5 132.1 L158.0 132.5 L158.5 133.0 L159.0 133.7 L159.5 134.4 L160.0 135.1 L160.5 135.7 L161.0 136.4 L161.5 137.1 L162.0 137.8 L162.5 138.5 L163.0 139.1 L163.5 139.8 L164.0 140.8 L164.5 141.8 L165.0 142.8 L165.5 143.8 L166.0 144.8 L166.5 145.8 L167.0 146.8 L167.5 147.8 L168.0 148.8 L168.5 149.8 L169.0 150.8 L169.5 151.8 L170.0 152.8 L170.5 153.7 L171.0 154.5 L171.5 155.3 L172.0 156.1 L172.5 156.9 L173.0 157.7 L173.5 158.5 L174.0 159.3 L174.5 160.1 L175.0 160.9 L175.5 161.7 L176.0 162.5 L176.5 163.3 L177.0 164.1 L177.5 164.9 L178.0 165.7 L178.5 166.5 L179.0 167.3 L179.5 168.1 L180.0 168.9 L180.5 169.7 L181.0 170.5 L181.5 171.3 L182.0 172.0 L182.5 172.8 L183.0 173.6 L183.5 174.4 L184.0 175.2 L184.5 176.0 L185.0 176.7 L185.5 177.5 L186.0 178.3 L186.5 179.0 L187.0 179.7 L187.5 180.4 L188.0 181.1 L188.5 181.8 L189.0 182.5 L189.5 183.2 L190.0 183.8 L190.5 184.5 L191.0 185.2 L191.5 185.9 L192.0 186.6 L192.5 187.3 L193.0 188.0 L193.5 188.6 L194.0 189.3 L194.5 190.0 L195.0 190.7 L195.5 191.4 L196.0 192.1 L196.5 192.8 L197.0 193.4 L197.5 194.1 L198.0 194.7 L198.5 195.3 L199.0 196.0 L199.5 196.6 L200.0 197.2 L200.5 197.8 L201.0 198.5 L201.5 199.1 L202.0 199.7 L202.5 200.3 L203.0 200.9 L203.5 201.5 L204.0 202.0 L204.5 202.5 L205.0 203.0 L205.5 203.5 L206.0 203.8 L206.5 204.0 L207.0 204.2 L207.5 203.8 L208.0 202.9 L208.5 202.0 L209.0 201.1 L209.5 200.2 L210.0 199.2 L210.5 198.1 L211.0 197.0 L211.5 195.9 L212.0 194.8 L212.5 193.7 L213.0 192.6 L213.5 191.5 L214.0 190.5 L214.5 189.4 L215.0 188.3 L215.5 187.2 L216.0 186.1 L216.5 185.0 L217.0 184.0 L217.5 182.9 L218.0 181.8 L218.5 180.8 L219.0 179.7 L219.5 178.6 L220.0 177.6 L220.5 176.5 L221.0 175.4 L221.5 174.4 L222.0 173.3 L222.5 172.2 L223.0 171.2 L223.5 170.1 L224.0 169.0 L224.5 168.0 L225.0 167.1 L225.5 166.3 L226.0 165.5 L226.5 164.7 L227.0 164.0 L227.5 163.2 L228.0 162.4 L228.5 161.7 L229.0 160.9 L229.5 160.1 L230.0 159.4 L230.5 158.7 L231.0 158.1 L231.5 157.5 L232.0 157.0 L232.5 156.4 L233.0 155.9 L233.5 155.3 L234.0 154.7 L234.5 154.2 L235.0 153.6 L235.5 153.1 L236.0 152.5 L236.5 152.0 L237.0 151.4 L237.5 150.8 L238.0 150.3 L238.5 149.7 L239.0 149.2 L239.5 148.6 L240.0 148.0 L240.5 147.5 L241.0 146.9 L241.5 146.4 L242.0 145.8 L242.5 145.2 L243.0 144.6 L243.5 143.9 L244.0 143.2 L244.5 142.6 L245.0 141.9 L245.5 141.2 L246.0 140.6 L246.5 139.9 L247.0 139.2 L247.5 138.5 L248.0 137.9 L248.5 137.2 L249.0 136.5 L249.5 135.9 L250.0 135.2 L250.5 134.6 L251.0 134.2 L251.5 133.8 L252.0 133.4 L252.5 133.0 L253.0 132.6 L253.5 132.2 L254.0 131.8 L254.5 131.5 L255.0 131.3 L255.5 131.1 L256.0 130.8 L256.5 130.6 L257.0 130.9 L257.5 131.2 L258.0 131.6 L258.5 131.9 L259.0 132.2 L259.5 132.6 L260.0 133.2 L260.5 133.9 L261.0 134.6 L261.5 135.3 L262.0 135.9 L262.5 136.6 L263.0 137.3 L263.5 138.0 L264.0 138.7 L264.5 139.3 L265.0 140.1 L265.5 141.1 L266.0 142.1 L266.5 143.1 L267.0 144.1 L267.5 145.1 L268.0 146.1 L268.5 147.1 L269.0 148.1 L269.5 149.1 L270.0 150.1 L270.5 151.1 L271.0 152.1 L271.5 153.2 L272.0 154.0 L272.5 154.8 L273.0 155.6 L273.5 156.4 L274.0 157.2 L274.5 158.0 L275.0 158.8 L275.5 159.6 L276.0 160.4 L276.5 161.2 L277.0 162.0 L277.5 162.8 L278.0 163.6 L278.5 164.4 L279.0 165.2 L279.5 166.0 L280.0 166.8 L280.5 167.6 L281.0 168.4 L281.5 169.2 L282.0 169.9 L282.5 170.7 L283.0 171.5 L283.5 172.3 L284.0 173.1 L284.5 173.9 L285.0 174.6 L285.5 175.4 L286.0 176.2 L286.5 177.0 L287.0 177.8 L287.5 178.5 L288.0 179.3 L288.5 179.9 L289.0 180.6 L289.5 181.3 L290.0 182.0 L290.5 182.7 L291.0 183.4 L291.5 184.1 L292.0 184.7 L292.5 185.4 L293.0 186.1 L293.5 186.8 L294.0 187.5 L294.5 188.2 L295.0 188.9 L295.5 189.6 L296.0 190.2 L296.5 190.9 L297.0 191.6 L297.5 192.3 L298.0 193.0 L298.5 193.7 L299.0 194.3 L299.5 194.9 L300.0 195.5 L300.5 196.2 L301.0 196.8 L301.5 197.4 L302.0 198.0 L302.5 198.7 L303.0 199.3 L303.5 199.9 L304.0 200.5 L304.5 201.1 L305.0 201.7 L305.5 202.2 L306.0 202.7 L306.5 203.2 L307.0 203.7 L307.5 203.9 L308.0 204.1 L308.5 204.3 L309.0 203.5 L309.5 202.6 L310.0 201.7 L310.5 200.8 L311.0 199.9 L311.5 198.9 L312.0 197.8 L312.5 196.7 L313.0 195.6 L313.5 194.5 L314.0 193.4 L314.5 192.3 L315.0 191.2 L315.5 190.1 L316.0 189.0 L316.5 187.9 L317.0 186.8 L317.5 185.8 L318.0 184.7 L318.5 183.6 L319.0 182.6 L319.5 181.5 L320.0 180.4 L320.5 179.4 L321.0 178.3 L321.5 177.2 L322.0 176.2 L322.5 175.1 L323.0 174.0 L323.5 173.0 L324.0 171.9 L324.5 170.8 L325.0 169.8 L325.5 168.7 L326.0 167.6 L326.5 166.8 L327.0 166.0 L327.5 165.3 L328.0 164.5 L328.5 163.7 L329.0 163.0 L329.5 162.2 L330.0 161.4 L330.5 160.7 L331.0 159.9 L331.5 159.1 L332.0 158.5 L332.5 157.9 L333.0 157.4 L333.5 156.8 L334.0 156.2 L334.5 155.7 L335.0 155.1 L335.5 154.6 L336.0 154.0 L336.5 153.5 L337.0 152.9 L337.5 152.3 L338.0 151.8 L338.5 151.2 L339.0 150.7 L339.5 150.1 L340.0 149.5 L340.5 149.0 L341.0 148.4 L341.5 147.9 L342.0 147.3 L342.5 146.8 L343.0 146.2 L343.5 145.6 L344.0 145.0 L344.5 144.4 L345.0 143.7 L345.5 143.0 L346.0 142.3 L346.5 141.7 L347.0 141.0 L347.5 140.3 L348.0 139.7 L348.5 139.0 L349.0 138.3 L349.5 137.7 L350.0 137.0 L350.5 136.3 L351.0 135.7 L351.5 135.0 L352.0 134.4 L352.5 134.0 L353.0 133.6 L353.5 133.2 L354.0 132.9 L354.5 132.5 L355.0 132.1 L355.5 131.7 L356.0 131.4 L356.5 131.2 L357.0 131.0 L357.5 130.8 L358.0 130.7 L358.5 131.0 L359.0 131.3 L359.5 131.7 L360.0 132.0 L360.5 132.3 L361.0 132.8 L361.5 133.4 L362.0 134.1 L362.5 134.8 L363.0 135.5 L363.5 136.2 L364.0 136.8 L364.5 137.5 L365.0 138.2 L365.5 138.9 L366.0 139.6 L366.5 140.5 L367.0 141.5 L367.5 142.5 L368.0 143.5 L368.5 144.5 L369.0 145.5 L369.5 146.5 L370.0 147.5 L370.5 148.5 L371.0 149.5 L371.5 150.5 L372.0 151.5 L372.5 152.5 L373.0 153.4 L373.5 154.2 L374.0 155.0 L374.5 155.8 L375.0 156.6 L375.5 157.4 L376.0 158.2 L376.5 159.0 L377.0 159.8 L377.5 160.6 L378.0 161.4 L378.5 162.2 L379.0 163.0 L379.5 163.9 L380.0 164.7 L380.5 165.5 L381.0 166.3 L381.5 167.1 L382.0 167.9 L382.5 168.6 L383.0 169.4 L383.5 170.2 L384.0 171.0 L384.5 171.8 L385.0 172.5 L385.5 173.3 L386.0 174.1 L386.5 174.9 L387.0 175.7 L387.5 176.5 L388.0 177.2 L388.5 178.0 L389.0 178.8 L389.5 179.5 L390.0 180.2 L390.5 180.9 L391.0 181.5 L391.5 182.2 L392.0 182.9 L392.5 183.6 L393.0 184.3 L393.5 185.0 L394.0 185.7 L394.5 186.3 L395.0 187.0 L395.5 187.7 L396.0 188.4 L396.5 189.1 L397.0 189.8 L397.5 190.5 L398.0 191.1 L398.5 191.8 L399.0 192.5 L399.5 193.2 L400.0 193.9 L400.5 194.5 L401.0 195.1 L401.5 195.7 L402.0 196.4 L402.5 197.0 L403.0 197.6 L403.5 198.2 L404.0 198.9 L404.5 199.5 L405.0 200.1 L405.5 200.7 L406.0 201.3 L406.5 201.8 L407.0 202.3 L407.5 202.8 L408.0 203.3 L408.5 203.7 L409.0 203.9 L409.5 204.1 L410.0 204.2 L410.5 203.3 L411.0 202.4 L411.5 201.5 L412.0 200.6 L412.5 199.6 L413.0 198.5 L413.5 197.4 L414.0 196.3 L414.5 195.2 L415.0 194.1 L415.5 193.0 L416.0 191.9 L416.5 190.8 L417.0 189.8 L417.5 188.7 L418.0 187.6 L418.5 186.5 L419.0 185.4 L419.5 184.3 L420.0 183.3 L420.5 182.2 L421.0 181.1 L421.5 180.1 L422.0 179.0 L422.5 177.9 L423.0 176.9 L423.5 175.8 L424.0 174.7 L424.5 173.7 L425.0 172.6 L425.5 171.5 L426.0 170.5 L426.5 169.4 L427.0 168.3 L427.5 167.3 L428.0 166.6 L428.5 165.8 L429.0 165.0 L429.5 164.3 L430.0 163.5 L430.5 162.7 L431.0 161.9 L431.5 161.2 L432.0 160.4 L432.5 159.6 L433.0 158.9 L433.5 158.3 L434.0 157.7 L434.5 157.2 L435.0 156.6 L435.5 156.1 L436.0 155.5 L436.5 155.0 L437.0 154.4 L437.5 153.8 L438.0 153.3 L438.5 152.7 L439.0 152.2 L439.5 151.6 L440.0 151.0 L440.5 150.5 L441.0 149.9 L441.5 149.4 L442.0 148.8 L442.5 148.2 L443.0 147.7 L443.5 147.1 L444.0 146.6 L444.5 146.0 L445.0 145.5 L445.5 144.8 L446.0 144.1 L446.5 143.5 L447.0 142.8 L447.5 142.1 L448.0 141.5 L448.5 140.8 L449.0 140.1 L449.5 139.5 L450.0 138.8 L450.5 138.1 L451.0 137.4 L451.5 136.8 L452.0 136.1 L452.5 135.4 L453.0 134.8 L453.5 134.3 L454.0 133.9 L454.5 133.5 L455.0 133.1 L455.5 132.7 L456.0 132.3 L456.5 131.9 L457.0 131.6 L457.5 131.3 L458.0 131.1 L458.5 130.9 L459.0 130.7 L459.5 130.8 L460.0 131.1 L460.5 131.5 L461.0 131.8 L461.5 132.1 L462.0 132.5 L462.5 133.0 L463.0 133.7 L463.5 134.3 L464.0 135.0 L464.5 135.7 L465.0 136.4 L465.5 137.1 L466.0 137.7 L466.5 138.4 L467.0 139.1 L467.5 139.8 L468.0 140.8 L468.5 141.8 L469.0 142.8 L469.5 143.8 L470.0 144.8 L470.5 145.8 L471.0 146.8 L471.5 147.8 L472.0 148.8 L472.5 149.8 L473.0 150.8 L473.5 151.8 L474.0 152.8 L474.5 153.7 L475.0 154.5 L475.5 155.3 L476.0 156.1 L476.5 156.9 L477.0 157.7 L477.5 158.5 L478.0 159.3 L478.5 160.1 L479.0 160.9 L479.5 161.7 L480.0 162.5 L480.5 163.3 L481.0 164.1 L481.5 164.9 L482.0 165.7 L482.5 166.5 L483.0 167.3 L483.5 168.1 L484.0 168.9 L484.5 169.7 L485.0 170.4 L485.5 171.2 L486.0 172.0 L486.5 172.8 L487.0 173.6 L487.5 174.4 L488.0 175.1 L488.5 175.9 L489.0 176.7 L489.5 177.5 L490.0 178.3 L490.5 179.0 L491.0 179.7 L491.5 180.4 L492.0 181.1 L492.5 181.8 L493.0 182.4 L493.5 183.1 L494.0 183.8 L494.5 184.5 L495.0 185.2 L495.5 185.9 L496.0 186.6 L496.5 187.2 L497.0 187.9 L497.5 188.6 L498.0 189.3 L498.5 190.0 L499.0 190.7 L499.5 191.4 L500.0 192.0 L500.5 192.7 L501.0 193.4 L501.5 194.1 L502.0 194.7 L502.5 195.3 L503.0 195.9 L503.5 196.6 L504.0 197.2 L504.5 197.8 L505.0 198.4 L505.5 199.0 L506.0 199.7 L506.5 200.3 L507.0 200.9 L507.5 201.5 L508.0 202.0 L508.5 202.5 L509.0 203.0 L509.5 203.5 L510.0 203.8 L510.5 204.0 L511.0 204.2 L511.5 203.9 L512.0 203.0 L512.5 202.1 L513.0 201.2 L513.5 200.3 L514.0 199.3 L514.5 198.2 L515.0 197.1 L515.5 196.0 L516.0 194.9 L516.5 193.8 L517.0 192.7 L517.5 191.6 L518.0 190.5 L518.5 189.4 L519.0 188.3 L519.5 187.2 L520.0 186.1 L520.5 185.1 L521.0 184.0 L521.5 182.9 L522.0 181.9 L522.5 180.8 L523.0 179.7 L523.5 178.7 L524.0 177.6 L524.5 176.5 L525.0 175.5 L525.5 174.4 L526.0 173.3 L526.5 172.3 L527.0 171.2 L527.5 170.1 L528.0 169.1 L528.5 168.0 L529.0 167.1 L529.5 166.3 L530.0 165.5 L530.5 164.8 L531.0 164.0 L531.5 163.2 L532.0 162.5 L532.5 161.7 L533.0 160.9 L533.5 160.2 L534.0 159.4 L534.5 158.7 L535.0 158.1 L535.5 157.6 L536.0 157.0 L536.5 156.4 L537.0 155.9 L537.5 155.3 L538.0 154.8 L538.5 154.2 L539.0 153.7 L539.5 153.1 L540.0 152.5 L540.5 152.0 L541.0 151.4 L541.5 150.9 L542.0 150.3 L542.5 149.7 L543.0 149.2 L543.5 148.6 L544.0 148.1 L544.5 147.5 L545.0 147.0 L545.5 146.4 L546.0 145.8 L546.5 145.3 L547.0 144.6 L547.5 143.9 L548.0 143.3 L548.5 142.6 L549.0 141.9 L549.5 141.2 L550.0 140.6 L550.5 139.9 L551.0 139.2 L551.5 138.6 L552.0 137.9 L552.5 137.2 L553.0 136.6 L553.5 135.9 L554.0 135.2 L554.5 134.6 L555.0 134.2 L555.5 133.8 L556.0 133.4 L556.5 133.0 L557.0 132.6 L557.5 132.2 L558.0 131.8 L558.5 131.5 L559.0 131.3 L559.5 131.1 L560.0 130.8 L560.5 130.6 L561.0 130.9 L561.5 131.2 L562.0 131.6 L562.5 131.9 L563.0 132.2 L563.5 132.6 L564.0 133.2 L564.5 133.9 L565.0 134.6 L565.5 135.2 L566.0 135.9 L566.5 136.6 L567.0 137.3 L567.5 138.0 L568.0 138.6 L568.5 139.3 L569.0 140.1 L569.5 141.1 L570.0 142.1 L570.5 143.1 L571.0 144.1 L571.5 145.1 L572.0 146.1 L572.5 147.1 L573.0 148.1 L573.5 149.1 L574.0 150.1 L574.5 151.1 L575.0 152.1 L575.5 153.1 L576.0 153.9 L576.5 154.7 L577.0 155.5 L577.5 156.3 L578.0 157.1 L578.5 157.9 L579.0 158.8 L579.5 159.6 L580.0 160.4 L580.5 161.2 L581.0 162.0 L581.5 162.8 L582.0 163.6 L582.5 164.4 L583.0 165.2 L583.5 166.0 L584.0 166.8 L584.5 167.6 L585.0 168.4 L585.5 169.1 L586.0 169.9 L586.5 170.7 L587.0 171.5 L587.5 172.3 L588.0 173.0 L588.5 173.8 L589.0 174.6 L589.5 175.4 L590.0 176.2 L590.5 177.0 L591.0 177.7 L591.5 178.5 L592.0 179.2 L592.5 179.9 L593.0 180.6 L593.5 181.3 L594.0 182.0 L594.5 182.7 L595.0 183.3 L595.5 184.0 L596.0 184.7 L596.5 185.4 L597.0 186.1 L597.5 186.8 L598.0 187.5 L598.5 188.2 L599.0 188.8 L599.5 189.5 L600.0 190.2 L600.5 190.9 L601.0 191.6 L601.5 192.3 L602.0 193.0 L602.5 193.6 L603.0 194.3 L603.5 194.9 L604.0 195.5 L604.5 196.1 L605.0 196.8 L605.5 197.4 L606.0 198.0 L606.5 198.6 L607.0 199.2 L607.5 199.9 L608.0 200.5 L608.5 201.1 L609.0 201.6 L609.5 202.1 L610.0 202.6 L610.5 203.1 L611.0 203.6 L611.5 203.9 L612.0 204.1 L612.5 204.3 L613.0 203.6 L613.5 202.7 L614.0 201.8 L614.5 200.9 L615.0 200.0 L615.5 198.9 L616.0 197.8 L616.5 196.7 L617.0 195.6 L617.5 194.5 L618.0 193.4 L618.5 192.3 L619.0 191.2 L619.5 190.1 L620.0 189.0 L620.5 188.0 L621.0 186.9 L621.5 185.8 L622.0 184.7 L622.5 183.7 L623.0 182.6 L623.5 181.5 L624.0 180.5 L624.5 179.4 L625.0 178.3 L625.5 177.3 L626.0 176.2 L626.5 175.1 L627.0 174.1 L627.5 173.0 L628.0 171.9 L628.5 170.9 L629.0 169.8 L629.5 168.7 L630.0 167.7 L630.5 166.8 L631.0 166.1 L631.5 165.3 L632.0 164.5 L632.5 163.8 L633.0 163.0 L633.5 162.2 L634.0 161.5 L634.5 160.7 L635.0 159.9 L635.5 159.1 L636.0 158.5 L636.5 157.9 L637.0 157.4 L637.5 156.8 L638.0 156.3 L638.5 155.7 L639.0 155.2 L639.5 154.6 L640.0 154.0 L640.5 153.5 L641.0 152.9 L641.5 152.4 L642.0 151.8 L642.5 151.2 L643.0 150.7 L643.5 150.1 L644.0 149.6 L644.5 149.0 L645.0 148.4 L645.5 147.9 L646.0 147.3 L646.5 146.8 L647.0 146.2 L647.5 145.7 L648.0 145.1 L648.5 144.4 L649.0 143.7 L649.5 143.0 L650.0 142.4 L650.5 141.7 L651.0 141.0 L651.5 140.4 L652.0 139.7 L652.5 139.0 L653.0 138.4 L653.5 137.7 L654.0 137.0 L654.5 136.3 L655.0 135.7 L655.5 135.0 L656.0 134.4 L656.5 134.1 L657.0 133.7 L657.5 133.3 L658.0 132.9 L658.5 132.5 L659.0 132.1 L659.5 131.7 L660.0 131.4 L660.5 131.2 L661.0 131.0 L661.5 130.8 L662.0 130.7 L662.5 131.0 L663.0 131.3 L663.5 131.7 L664.0 132.0 L664.5 132.3 L665.0 132.7 L665.5 133.4 L666.0 134.1 L666.5 134.8 L667.0 135.5 L667.5 136.1 L668.0 136.8 L668.5 137.5 L669.0 138.2 L669.5 138.9 L670.0 139.5 L670.5 140.4 L671.0 141.4 L671.5 142.4 L672.0 143.4 L672.5 144.4 L673.0 145.4 L673.5 146.4 L674.0 147.4 L674.5 148.4 L675.0 149.4 L675.5 150.4 L676.0 151.4 L676.5 152.4 L677.0 153.4 L677.5 154.2 L678.0 155.0 L678.5 155.8 L679.0 156.6 L679.5 157.4 L680.0 158.2 L680.5 159.0 L681.0 159.8 L681.5 160.6 L682.0 161.4 L682.5 162.2 L683.0 163.0 L683.5 163.8 L684.0 164.6 L684.5 165.4 L685.0 166.2 L685.5 167.0 L686.0 167.8 L686.5 168.6 L687.0 169.4 L687.5 170.2 L688.0 170.9 L688.5 171.7 L689.0 172.5 L689.5 173.3 L690.0 174.1 L690.5 174.9 L691.0 175.6 L691.5 176.4 L692.0 177.2 L692.5 178.0 L693.0 178.8 L693.5 179.5 L694.0 180.1 L694.5 180.8 L695.0 181.5 L695.5 182.2 L696.0 182.9 L696.5 183.6 L697.0 184.3 L697.5 184.9 L698.0 185.6 L698.5 186.3 L699.0 187.0 L699.5 187.7 L700.0 188.4 L700.5 189.1 L701.0 189.7 L701.5 190.4 L702.0 191.1 L702.5 191.8 L703.0 192.5 L703.5 193.2 L704.0 193.8 L704.5 194.5 L705.0 195.1 L705.5 195.7 L706.0 196.3 L706.5 197.0 L707.0 197.6 L707.5 198.2 L708.0 198.8 L708.5 199.4 L709.0 200.1 L709.5 200.7 L710.0 201.3 L710.5 201.8 L711.0 202.3 L711.5 202.8 L712.0 203.3 L712.5 203.7 L713.0 203.9 L713.5 204.1 L714.0 204.2 L714.5 203.3 L715.0 202.4 L715.5 201.5 L716.0 200.6 L716.5 199.7 L717.0 198.6 L717.5 197.5 L718.0 196.4 L718.5 195.3 L719.0 194.2 L719.5 193.1 L720.0 192.0 L720.5 190.9 L721.0 189.8 L721.5 188.7 L722.0 187.6 L722.5 186.5 L723.0 185.5 L723.5 184.4 L724.0 183.3 L724.5 182.3 L725.0 181.2 L725.5 180.1 L726.0 179.1 L726.5 178.0 L727.0 176.9 L727.5 175.9 L728.0 174.8 L728.5 173.7 L729.0 172.7 L729.5 171.6 L730.0 170.5 L730.5 169.5 L731.0 168.4 L731.5 167.4 L732.0 166.6 L732.5 165.8 L733.0 165.1 L733.5 164.3 L734.0 163.5 L734.5 162.7 L735.0 162.0 L735.5 161.2 L736.0 160.4 L736.5 159.7 L737.0 158.9 L737.5 158.3 L738.0 157.8 L738.5 157.2 L739.0 156.6 L739.5 156.1 L740.0 155.5 L740.5 155.0 L741.0 154.4 L741.5 153.9 L742.0 153.3 L742.5 152.7 L743.0 152.2 L743.5 151.6 L744.0 151.1 L744.5 150.5 L745.0 149.9 L745.5 149.4 L746.0 148.8 L746.5 148.3 L747.0 147.7 L747.5 147.2 L748.0 146.6 L748.5 146.0 L749.0 145.5 L749.5 144.8 L750.0 144.2 L750.5 143.5 L751.0 142.8 L751.5 142.2 L752.0 141.5 L752.5 140.8 L753.0 140.2 L753.5 139.5 L754.0 138.8 L754.5 138.1 L755.0 137.5 L755.5 136.8 L756.0 136.1 L756.5 135.5 L757.0 134.8 L757.5 134.3 L758.0 133.9 L758.5 133.5 L759.0 133.1 L759.5 132.7 L760.0 132.3 L760.5 131.9 L761.0 131.6 L761.5 131.4 L762.0 131.1 L762.5 130.9 L763.0 130.7 L763.5 130.8 L764.0 131.1 L764.5 131.4 L765.0 131.8 L765.5 132.1 L766.0 132.4 L766.5 133.0 L767.0 133.6 L767.5 134.3 L768.0 135.0 L768.5 135.7 L769.0 136.4 L769.5 137.0 L770.0 137.7 L770.5 138.4 L771.0 139.1 L771.5 139.8 L772.0 140.7 L772.5 141.7 L773.0 142.7 L773.5 143.7 L774.0 144.7 L774.5 145.7 L775.0 146.7 L775.5 147.7 L776.0 148.7 L776.5 149.7 L777.0 150.7 L777.5 151.7 L778.0 152.8 L778.5 153.6 L779.0 154.5 L779.5 155.3 L780.0 156.1 L780.5 156.9 L781.0 157.7 L781.5 158.5 L782.0 159.3 L782.5 160.1 L783.0 160.9 L783.5 161.7 L784.0 162.5 L784.5 163.3 L785.0 164.1 L785.5 164.9 L786.0 165.7 L786.5 166.5 L787.0 167.3 L787.5 168.1 L788.0 168.9 L788.5 169.6 L789.0 170.4 L789.5 171.2 L790.0 172.0 L790.5 172.8 L791.0 173.5 L791.5 174.3 L792.0 175.1 L792.5 175.9 L793.0 176.7 L793.5 177.5 L794.0 178.2 L794.5 179.0 L795.0 179.7 L795.5 180.4 L796.0 181.0 L796.5 181.7 L797.0 182.4 L797.5 183.1 L798.0 183.8 L798.5 184.5 L799.0 185.2 L799.5 185.8 L800.0 186.5 L800.5 187.2 L801.0 187.9 L801.5 188.6 L802.0 189.3 L802.5 190.0 L803.0 190.6 L803.5 191.3 L804.0 192.0 L804.5 192.7 L805.0 193.4 L805.5 194.0 L806.0 194.7 L806.5 195.3 L807.0 195.9 L807.5 196.5 L808.0 197.2 L808.5 197.8 L809.0 198.4 L809.5 199.0 L810.0 199.6 L810.5 200.3 L811.0 200.9 L811.5 201.5 L812.0 202.0 L812.5 202.5 L813.0 203.0 L813.5 203.5 L814.0 203.8 L814.5 204.0 L815.0 204.2 L815.5 203.9 L816.0 203.0 L816.5 202.1 L817.0 201.2 L817.5 200.3 L818.0 199.3 L818.5 198.2 L819.0 197.1 L819.5 196.0 L820.0 194.9 L820.5 193.8 L821.0 192.7 L821.5 191.6 L822.0 190.5 L822.5 189.4 L823.0 188.3 L823.5 187.3 L824.0 186.2 L824.5 185.1 L825.0 184.0 L825.5 183.0 L826.0 181.9 L826.5 180.8 L827.0 179.8 L827.5 178.7 L828.0 177.6 L828.5 176.6 L829.0 175.5 L829.5 174.4 L830.0 173.4 L830.5 172.3 L831.0 171.2 L831.5 170.2 L832.0 169.1 L832.5 168.0 L833.0 167.1 L833.5 166.3 L834.0 165.6 L834.5 164.8 L835.0 164.0 L835.5 163.3 L836.0 162.5 L836.5 161.7 L837.0 161.0 L837.5 160.2 L838.0 159.4 L838.5 158.7 L839.0 158.1 L839.5 157.6 L840.0 157.0 L840.5 156.5 L841.0 155.9 L841.5 155.4 L842.0 154.8 L842.5 154.2 L843.0 153.7 L843.5 153.1 L844.0 152.6 L844.5 152.0 L845.0 151.4 L845.5 150.9 L846.0 150.3 L846.5 149.8 L847.0 149.2 L847.5 148.6 L848.0 148.1 L848.5 147.5 L849.0 147.0 L849.5 146.4 L850.0 145.9 L850.5 145.3 L851.0 144.6 L851.5 144.0 L852.0 143.3 L852.5 142.6 L853.0 141.9 L853.5 141.3 L854.0 140.6 L854.5 139.9 L855.0 139.3 L855.5 138.6 L856.0 137.9 L856.5 137.3 L857.0 136.6 L857.5 135.9 L858.0 135.2 L858.5 134.6 L859.0 134.2 L859.5 133.8 L860.0 133.4 L860.5 133.0 L861.0 132.6 L861.5 132.2 L862.0 131.8 L862.5 131.5 L863.0 131.3 L863.5 131.1 L864.0 130.9 L864.5 130.6 L865.0 130.9 L865.5 131.2 L866.0 131.5 L866.5 131.9 L867.0 132.2 L867.5 132.5 L868.0 133.2 L868.5 133.9 L869.0 134.5 L869.5 135.2 L870.0 135.9 L870.5 136.6 L871.0 137.3 L871.5 137.9 L872.0 138.6 L872.5 139.3 L873.0 140.1 L873.5 141.1 L874.0 142.1 L874.5 143.1 L875.0 144.1 L875.5 145.1 L876.0 146.1" fill="none" stroke="#0000ff" stroke-width="1" shape-rendering="crispEdges"/><path d="M80.0 301.6 L102.9 302.4 L102.9 302.4 L104.4 308.6 L105.8 283.7 L106.6 249.2 L108.0 236.0 L110.2 231.8 L111.4 231.3 L134.4 230.4 L144.4 229.6 L149.9 229.2 L151.4 231.0 L152.8 236.7 L155.8 251.4 L158.7 277.8 L160.9 292.0 L162.9 298.0 L165.4 300.8 L168.4 301.4 L180.7 301.6 L204.2 302.4 L204.2 302.4 L205.7 308.6 L207.1 283.7 L207.9 249.2 L209.3 236.0 L211.5 231.8 L212.7 231.3 L235.7 230.4 L245.7 229.6 L251.2 229.2 L252.7 231.0 L254.1 236.7 L257.1 251.4 L260.0 277.8 L262.2 292.0 L264.2 298.0 L266.7 300.8 L269.7 301.4 L282.0 301.6 L305.6 302.4 L305.6 302.4 L307.1 308.6 L308.5 283.7 L309.3 249.2 L310.7 236.0 L312.9 231.8 L314.1 231.3 L337.1 230.4 L347.1 229.6 L352.6 229.2 L354.1 231.0 L355.5 236.7 L358.5 251.4 L361.4 277.8 L363.6 292.0 L365.6 298.0 L368.1 300.8 L371.1 301.4 L383.4 301.6 L406.9 302.4 L406.9 302.4 L408.4 308.6 L409.8 283.7 L410.6 249.2 L412.0 236.0 L414.2 231.8 L415.4 231.3 L438.4 230.4 L448.4 229.6 L453.9 229.2 L455.4 231.0 L456.8 236.7 L459.8 251.4 L462.7 277.8 L464.9 292.0 L466.9 298.0 L469.4 300.8 L472.4 301.4 L484.7 301.6 L508.3 302.4 L508.3 302.4 L509.8 308.6 L511.2 283.7 L512.0 249.2 L513.4 236.0 L515.6 231.8 L516.8 231.3 L539.8 230.4 L549.8 229.6 L555.3 229.2 L556.8 231.0 L558.2 236.7 L561.2 251.4 L564.1 277.8 L566.3 292.0 L568.3 298.0 L570.8 300.8 L573.8 301.4 L586.1 301.6 L609.6 302.4 L609.6 302.4 L611.1 308.6 L612.5 283.7 L613.3 249.2 L614.7 236.0 L616.9 231.8 L618.1 231.3 L641.1 230.4 L651.1 229.6 L656.6 229.2 L658.1 231.0 L659.5 236.7 L662.5 251.4 L665.4 277.8 L667.6 292.0 L669.6 298.0 L672.1 300.8 L675.1 301.4 L687.4 301.6 L710.9 302.4 L710.9 302.4 L712.4 308.6 L713.8 283.7 L714.6 249.2 L716.0 236.0 L718.2 231.8 L719.4 231.3 L742.4 230.4 L752.4 229.6 L757.9 229.2 L759.4 231.0 L760.8 236.7 L763.8 251.4 L766.7 277.8 L768.9 292.0 L770.9 298.0 L773.4 300.8 L776.4 301.4 L788.7 301.6 L812.3 302.4 L812.3 302.4 L813.8 308.6 L815.2 283.7 L816.0 249.2 L817.4 236.0 L819.6 231.8 L820.8 231.3 L843.8 230.4 L853.8 229.6 L859.3 229.2 L860.8 231.0 L862.2 236.7 L865.2 251.4 L868.1 277.8 L870.3 292.0 L872.3 298.0 L874.8 300.8 L876.0 301.0" fill="none" stroke="#00ff80" stroke-width="1" shape-rendering="crispEdges"/><rect x="511.5" y="122.5" width="101" height="93.5" fill="none" stroke="#fff" stroke-dasharray="1 1" shape-rendering="crispEdges"/><g font-family="Liberation Sans" font-weight="bold" font-size="14" fill="#acacac"><text x="72.5" y="135" text-anchor="end">4.99788V</text><text x="72.5" y="174" text-anchor="end">4.99758V</text><text x="72.5" y="212" text-anchor="end">4.99728V</text><text x="886" y="135">2.70mA</text><text x="886" y="174">2.40mA</text><text x="886" y="212">2.10mA</text><text x="72.5" y="233" text-anchor="end">5.0V</text><text x="72.5" y="249" text-anchor="end">4.0V</text><text x="72.5" y="265" text-anchor="end">3.0V</text><text x="72.5" y="282" text-anchor="end">2.0V</text><text x="72.5" y="298" text-anchor="end">1.0V</text><text x="72.5" y="314" text-anchor="end">0.0V</text><text x="80.5" y="330" text-anchor="middle">156.8µs</text><text x="152.9" y="330" text-anchor="middle">157.5µs</text><text x="225.2" y="330" text-anchor="middle">158.2µs</text><text x="297.6" y="330" text-anchor="middle">158.9µs</text><text x="370.0" y="330" text-anchor="middle">159.6µs</text><text x="442.3" y="330" text-anchor="middle">160.3µs</text><text x="514.7" y="330" text-anchor="middle">161.0µs</text><text x="587.0" y="330" text-anchor="middle">161.7µs</text><text x="659.4" y="330" text-anchor="middle">162.4µs</text><text x="731.8" y="330" text-anchor="middle">163.1µs</text><text x="804.1" y="330" text-anchor="middle">163.8µs</text><text x="876.5" y="330" text-anchor="middle">164.5µs</text></g><text x="266.5" y="125" font-family="Liberation Sans" font-weight="bold" font-size="14" fill="#0000ff" textLength="24" lengthAdjust="spacingAndGlyphs">V(p)</text><text x="660.3" y="125" font-family="Liberation Sans" font-weight="bold" font-size="14" fill="#00ff00" textLength="32.5" lengthAdjust="spacingAndGlyphs">-I(V1)</text><text x="465.5" y="223" font-family="Liberation Sans" font-weight="bold" font-size="14" fill="#00ff80" textLength="24" lengthAdjust="spacingAndGlyphs">V(x)</text></svg>
<svg class="abs" style="left:0;top:0" width="952" height="633"><g fill="none" stroke-width="1" shape-rendering="crispEdges"><path d="M355.60 436.10 L355.60 414.60 L452.50 414.60" stroke="#0000ff"/><path d="M355.60 479.02 L355.60 489.85" stroke="#0000ff"/><path d="M355.60 489.85 L452.17 489.85" stroke="#0000ff"/><path d="M398.52 468.25 L398.52 489.85" stroke="#0000ff"/><path d="M398.52 489.85 L398.52 511.35" stroke="#0000ff"/><path d="M355.60 532.77 L355.60 565.10 L398.52 565.10" stroke="#0000ff"/><path d="M452.17 457.60 L452.17 565.10" stroke="#0000ff"/><path d="M505.82 457.60 L505.82 414.60 L559.47 414.60" stroke="#0000ff"/><path d="M559.47 457.60 L559.47 500.60" stroke="#0000ff"/><path d="M559.47 543.52 L559.47 565.10" stroke="#0000ff"/><path d="M505.82 565.10 L677.50 565.10" stroke="#0000ff"/><path d="M602.39 414.60 L666.77 414.60" stroke="#0000ff"/><path d="M720.42 414.60 L763.34 414.60 L763.34 479.10" stroke="#0000ff"/><path d="M634.58 414.60 L634.58 425.35" stroke="#0000ff"/><path d="M634.58 479.00 L634.58 489.85 L645.31 489.85" stroke="#0000ff"/><path d="M731.15 565.10 L774.07 565.10 L774.07 500.60" stroke="#0000ff"/><path d="M763.34 479.10 L774.07 500.60 L817.40 500.60 L827.72 479.10 L827.72 479.00" stroke="#0000ff"/><path d="M805.50 414.60 L827.72 414.60 L827.72 425.35" stroke="#0000ff"/><path d="M688.23 500.60 L699.80 500.60 L709.69 479.10" stroke="#0000ff"/><path d="M193.5 500.5H217.6L205.6 512.5Z" stroke="#0000ff"/><path d="M398.52 554L398.52 577L410.7 565.5Z" stroke="#0000ff"/><path d="M654.9 522.5H679.5L667 534.3Z" stroke="#0000ff"/><path d="M398.52 414.60 L398.52 419.97 L409.25 425.33 L387.79 436.06 L409.25 446.79 L387.79 457.52 L398.52 462.89 L398.52 468.25" stroke="#000080"/><path d="M398.52 511.35 L398.52 516.72 L409.25 522.08 L387.79 532.81 L409.25 543.54 L387.79 554.27 L398.52 559.63 L398.52 565.00" stroke="#000080"/><path d="M634.58 425.35 L634.58 430.72 L645.31 436.08 L623.85 446.81 L645.31 457.54 L623.85 468.27 L634.58 473.64 L634.58 479.00" stroke="#000080"/><path d="M634.58 511.35 L634.58 516.72 L645.31 522.08 L623.85 532.81 L645.31 543.54 L623.85 554.27 L634.58 559.63 L634.58 565.00" stroke="#000080"/><path d="M827.72 425.35 L827.72 430.72 L838.45 436.08 L816.99 446.81 L838.45 457.54 L816.99 468.27 L827.72 473.64 L827.72 479.00" stroke="#000080"/><path d="M452.17 457.60 L457.54 457.60 L462.90 446.87 L473.63 468.33 L484.36 446.87 L495.09 468.33 L500.46 457.60 L505.82 457.60" stroke="#000080"/><path d="M505.82 457.60 L511.19 457.60 L516.55 446.87 L527.28 468.33 L538.01 446.87 L548.74 468.33 L554.11 457.60 L559.47 457.60" stroke="#000080"/><path d="M452.17 565.10 L457.54 565.10 L462.90 554.37 L473.63 575.83 L484.36 554.37 L495.09 575.83 L500.46 565.10 L505.82 565.10" stroke="#000080"/><path d="M666.77 414.60 L672.13 414.60 L677.50 403.87 L688.23 425.33 L698.96 403.87 L709.69 425.33 L715.05 414.60 L720.42 414.60" stroke="#000080"/><path d="M709.69 479.10 L715.06 479.10 L720.42 468.37 L731.15 489.83 L741.88 468.37 L752.61 489.83 L757.98 479.10 L763.34 479.10" stroke="#000080"/><path d="M677.50 565.10 L682.87 565.10 L688.23 554.37 L698.96 575.83 L709.69 554.37 L720.42 575.83 L725.78 565.10 L731.15 565.10" stroke="#000080"/><path d="M355.60 436.10 V454.88 M344.87 454.88 H366.33 M344.87 460.24 H366.33 M355.60 460.24 V479.02" stroke="#000080"/><path d="M355.60 489.85 V508.63 M344.87 508.63 H366.33 M344.87 513.99 H366.33 M355.60 513.99 V532.77" stroke="#000080"/><path d="M559.47 500.60 V519.38 M548.74 519.38 H570.20 M548.74 524.74 H570.20 M559.47 524.74 V543.52" stroke="#000080"/><path d="M559.47 414.60 H578.25 M578.25 403.87 V425.33 M583.61 403.87 V425.33 M583.61 414.60 H602.39" stroke="#000080"/><path d="M645.31 479.10 L688.23 500.60 L645.31 522.10 Z" stroke="#000080"/><path d="M648 489.85H654 M648 511.4H654 M651 508.4V514.4 M666.77 477.6V489 M666.77 511.5V522.5 M669 487H675 M672 484V490 M669 514H675" stroke="#000080"/><path d="M634.6 511.4H645.31" stroke="#000080"/><rect x="676.4" y="499" width="4.6" height="3.6" fill="#000080" stroke="none"/><circle cx="205.6" cy="473" r="21" stroke="#000080"/><path d="M205.6 444.5V452 M205.6 494V500.5 M200 461H211.3 M205.6 455.5V466.5 M200 487.6H211.3" stroke="#000080"/><path d="M199.8 446.0 V441.5 Q199.8 438.7 202.5 438.7 Q205.0 438.7 205.0 441.5 V446.0" stroke="#000" stroke-width="1.6" shape-rendering="auto"/><rect x="199.0" y="445.0" width="11.5" height="2" fill="#000" stroke="none"/><path d="M660.8 478.0 V473.5 Q660.8 470.7 663.5 470.7 Q666.0 470.7 666.0 473.5 V478.0" stroke="#000" stroke-width="1.6" shape-rendering="auto"/><rect x="660.0" y="477.0" width="11.5" height="2" fill="#000" stroke="none"/></g><rect x="395.02" y="411.10" width="7" height="7" fill="#0000ff"/><rect x="352.10" y="486.35" width="7" height="7" fill="#0000ff"/><rect x="395.02" y="486.35" width="7" height="7" fill="#0000ff"/><rect x="448.67" y="486.35" width="7" height="7" fill="#0000ff"/><rect x="502.32" y="454.10" width="7" height="7" fill="#0000ff"/><rect x="555.97" y="561.60" width="7" height="7" fill="#0000ff"/><rect x="631.08" y="411.10" width="7" height="7" fill="#0000ff"/><rect x="631.08" y="561.60" width="7" height="7" fill="#0000ff"/><rect x="759.84" y="475.60" width="7" height="7" fill="#0000ff"/><rect x="770.57" y="497.10" width="7" height="7" fill="#0000ff"/><g font-family="Liberation Sans" font-weight="bold"><text x="220.0" y="452.8" font-size="14" textLength="20.2" lengthAdjust="spacingAndGlyphs" fill="#000">V1</text><text x="220.0" y="471.0" font-size="14" textLength="10.5" lengthAdjust="spacingAndGlyphs" fill="#000">5</text><text x="221.0" y="489.7" font-size="14" textLength="56.2" lengthAdjust="spacingAndGlyphs" fill="#000">Rser=1</text><text x="329.8" y="446.4" font-size="14" textLength="19.7" lengthAdjust="spacingAndGlyphs" fill="#000">C1</text><text x="331.5" y="478.5" font-size="14" textLength="18.9" lengthAdjust="spacingAndGlyphs" fill="#000">1µ</text><text x="329.6" y="500.9" font-size="14" textLength="20.8" lengthAdjust="spacingAndGlyphs" fill="#000">C4</text><text x="331.3" y="532.1" font-size="14" textLength="19.6" lengthAdjust="spacingAndGlyphs" fill="#000">1µ</text><text x="411.6" y="435.6" font-size="14" textLength="20.9" lengthAdjust="spacingAndGlyphs" fill="#000">R7</text><text x="411.6" y="460.5" font-size="14" textLength="30.0" lengthAdjust="spacingAndGlyphs" fill="#000">47k</text><text x="411.6" y="532.7" font-size="14" textLength="21.9" lengthAdjust="spacingAndGlyphs" fill="#000">R8</text><text x="411.6" y="556.5" font-size="14" textLength="29.7" lengthAdjust="spacingAndGlyphs" fill="#000">47k</text><text x="452.2" y="419.6" font-size="14" textLength="10.2" lengthAdjust="spacingAndGlyphs" fill="#000">P</text><text x="467.9" y="443.5" font-size="14" textLength="21.5" lengthAdjust="spacingAndGlyphs" fill="#000">R6</text><text x="459.4" y="482.4" font-size="14" textLength="38.9" lengthAdjust="spacingAndGlyphs" fill="#000">100k</text><text x="515.7" y="443.5" font-size="14" textLength="31.0" lengthAdjust="spacingAndGlyphs" fill="#000">R10</text><text x="512.5" y="482.4" font-size="14" textLength="38.9" lengthAdjust="spacingAndGlyphs" fill="#000">100k</text><text x="570.3" y="400.5" font-size="14" textLength="20.9" lengthAdjust="spacingAndGlyphs" fill="#000">C3</text><text x="571.3" y="438.8" font-size="14" textLength="19.0" lengthAdjust="spacingAndGlyphs" fill="#000">1µ</text><text x="533.3" y="511.8" font-size="14" textLength="20.9" lengthAdjust="spacingAndGlyphs" fill="#000">C2</text><text x="535.8" y="542.5" font-size="14" textLength="18.1" lengthAdjust="spacingAndGlyphs" fill="#000">1µ</text><text x="467.9" y="550.5" font-size="14" textLength="21.5" lengthAdjust="spacingAndGlyphs" fill="#000">R4</text><text x="474.5" y="589.6" font-size="14" textLength="8.7" lengthAdjust="spacingAndGlyphs" fill="#000">1</text><text x="681.9" y="400.4" font-size="14" textLength="21.0" lengthAdjust="spacingAndGlyphs" fill="#000">R5</text><text x="677.7" y="439.9" font-size="14" textLength="29.4" lengthAdjust="spacingAndGlyphs" fill="#000">50k</text><text x="600.0" y="444.5" font-size="14" textLength="21.0" lengthAdjust="spacingAndGlyphs" fill="#000">R9</text><text x="592.7" y="468.7" font-size="14" textLength="28.9" lengthAdjust="spacingAndGlyphs" fill="#000">10k</text><text x="725.0" y="464.7" font-size="14" textLength="21.0" lengthAdjust="spacingAndGlyphs" fill="#000">R3</text><text x="721.3" y="503.3" font-size="14" textLength="30.0" lengthAdjust="spacingAndGlyphs" fill="#000">300</text><text x="590.6" y="529.8" font-size="14" textLength="29.7" lengthAdjust="spacingAndGlyphs" fill="#000">R11</text><text x="592.8" y="554.5" font-size="14" textLength="28.6" lengthAdjust="spacingAndGlyphs" fill="#000">10k</text><text x="677.7" y="527.6" font-size="14" textLength="61.0" lengthAdjust="spacingAndGlyphs" fill="#000">AN1393</text><text x="693.2" y="551.4" font-size="14" textLength="20.2" lengthAdjust="spacingAndGlyphs" fill="#000">R1</text><text x="683.9" y="590.5" font-size="14" textLength="40.5" lengthAdjust="spacingAndGlyphs" fill="#000">1meg</text><text x="796.5" y="419.7" font-size="14" textLength="9.5" lengthAdjust="spacingAndGlyphs" fill="#000">P</text><text x="841.0" y="446.8" font-size="14" textLength="20.9" lengthAdjust="spacingAndGlyphs" fill="#000">R2</text><text x="841.0" y="470.9" font-size="14" textLength="29.5" lengthAdjust="spacingAndGlyphs" fill="#000">3k6</text><text x="789.8" y="496.5" font-size="14" textLength="11.0" lengthAdjust="spacingAndGlyphs" fill="#000">X</text><text x="119.0" y="532.5" font-size="15" textLength="182.1" lengthAdjust="spacingAndGlyphs" fill="#000">.tran 0 1k 0 10m startup</text><text x="76.3" y="557.9" font-size="10" textLength="276.9" lengthAdjust="spacingAndGlyphs" fill="#0000d0">R6:R4 R5:R1 :: 1:100k 400k:50k(10k) 1Hz(470mHz)</text><text x="76.3" y="571.0" font-size="10" textLength="276.9" lengthAdjust="spacingAndGlyphs" fill="#0000d0">R6:R4 R5:R1 :: 100k:1 50k(10k):1M0 1MHz(1.4MHz)</text></g></svg>
</body></html>
